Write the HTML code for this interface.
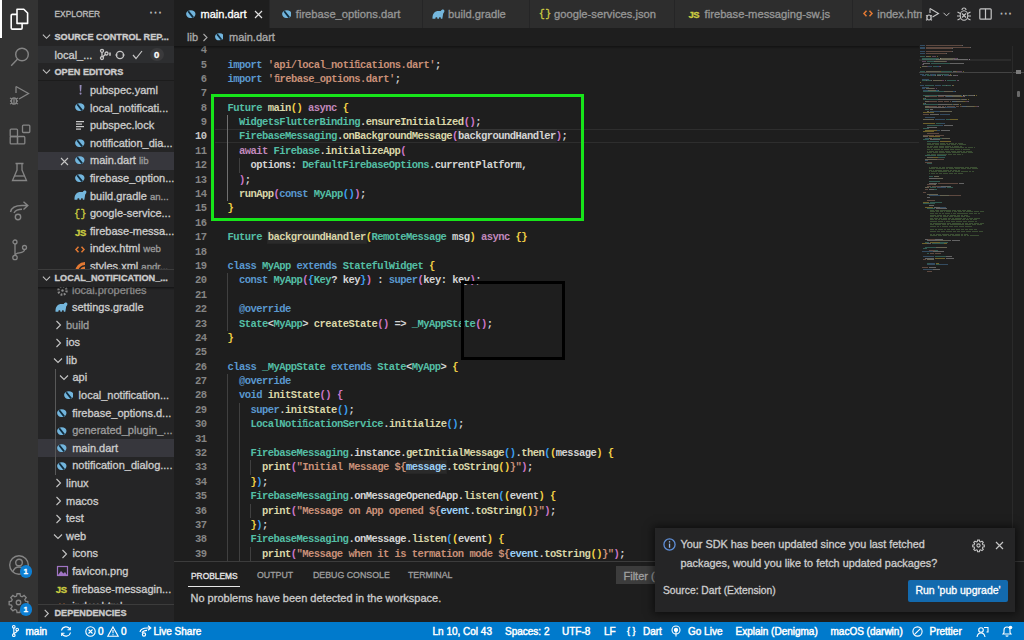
<!DOCTYPE html>
<html><head><meta charset="utf-8">
<style>
*{box-sizing:border-box;margin:0;padding:0}
html,body{width:1024px;height:640px;overflow:hidden;background:#1e1e1e}
body{position:relative;font-family:"Liberation Sans",sans-serif;color:#cccccc}
.t{-webkit-text-stroke:0.32px currentColor}
.a{position:absolute}
.t{position:absolute;white-space:nowrap;line-height:1}
.ln{position:absolute;left:170px;width:36.5px;text-align:right;font:bold 10.5px/14.4px "Liberation Mono",monospace;letter-spacing:-0.54px;height:14.4px}
.cl{position:absolute;left:227.4px;font:bold 10.5px/14.4px "Liberation Mono",monospace;letter-spacing:-0.54px;white-space:pre;height:14.4px}
.hl{background:rgba(255,255,255,.055);outline:1px solid rgba(255,255,255,.04)}
.sb{font-size:11px;color:#cccccc}
.hdr{font-size:9.15px;font-weight:bold;color:#cccccc}
.ic{position:absolute;overflow:visible}
.fi{display:inline-block;width:5.76px;letter-spacing:-3.3px;transform:scaleX(.72);transform-origin:0 50%;margin-left:.2px}
</style></head><body>

<!-- ACTIVITY BAR -->
<div class="a" style="left:0;top:0;width:38.4px;height:622px;background:#333333"></div>
<div class="a" style="left:0;top:0;width:2px;height:38px;background:#ffffff"></div>
<!-- explorer icon -->
<svg class="ic" style="left:9px;top:8px" width="20" height="22" viewBox="0 0 20 22" fill="none" stroke="#ffffff" stroke-width="1.6" stroke-linejoin="round">
 <path d="M8 1.2 H14.8 L18.6 5 V15.4 H8 Z"/>
 <path d="M8 6.4 H3.3 Q2.2 6.4 2.2 7.5 V20 Q2.2 21.1 3.3 21.1 H12 Q13.1 21.1 13.1 20 V15.4"/>
</svg>
<!-- search -->
<svg class="ic" style="left:9px;top:45px" width="22" height="24" viewBox="0 0 22 24" fill="none" stroke="#858585" stroke-width="1.4">
 <circle cx="13" cy="9.5" r="6.3"/><path d="M8.6 14 L2.2 20.8"/>
</svg>
<!-- run debug -->
<svg class="ic" style="left:8px;top:84px" width="24" height="24" viewBox="0 0 24 24" fill="none" stroke="#858585" stroke-width="1.3">
 <path d="M8 2.5 L20.5 9.5 L11 15"/><path d="M8 2.5 V9"/>
 <ellipse cx="6" cy="17" rx="2.6" ry="3.2"/><path d="M2 14 L4 15 M2 17 H3.4 M2 20 L4 19 M10 14 L8 15 M10 17 H8.6 M10 20 L8 19 M6 14 V20"/>
</svg>
<!-- extensions -->
<svg class="ic" style="left:8.5px;top:123.5px" width="22" height="22" viewBox="0 0 22 22" fill="none" stroke="#858585" stroke-width="1.3">
 <rect x="1.2" y="5.2" width="7.3" height="7.3" rx=".9"/><rect x="1.2" y="12.5" width="7.3" height="7.3" rx=".9"/><rect x="8.5" y="12.5" width="7.3" height="7.3" rx=".9"/><rect x="13.5" y="1.2" width="7.3" height="7.3" rx=".9"/>
</svg>
<!-- testing flask -->
<svg class="ic" style="left:11px;top:162px" width="18" height="22" viewBox="0 0 18 22" fill="none" stroke="#858585" stroke-width="1.3">
 <path d="M4.5 1.5 H12.5 M6 1.5 V8 L1.5 18.5 H15.5 L11 8 V1.5"/><path d="M3.3 14 H13.7"/>
</svg>
<!-- live share -->
<svg class="ic" style="left:9px;top:200px" width="22" height="22" viewBox="0 0 22 22" fill="none" stroke="#858585" stroke-width="1.4">
 <path d="M1.5 12 C2.5 7 7 5.5 13 5.5 H18.5 M14.5 1.8 L18.8 5.6 L14.5 9.4"/><path d="M5 13 C6.5 10.2 9 9.3 13 9.3"/><circle cx="9" cy="17" r="2.7"/>
</svg>
<!-- source control -->
<svg class="ic" style="left:11px;top:239px" width="18" height="22" viewBox="0 0 18 22" fill="none" stroke="#858585" stroke-width="1.3">
 <circle cx="4" cy="3" r="2"/><circle cx="4" cy="18.5" r="2.2"/><circle cx="13.5" cy="8.5" r="2"/><path d="M4 5 V16.3 M13.5 10.5 C13.5 13 11 13.5 8.5 13.8 C6.5 14 4.5 14.5 4.2 16"/>
</svg>
<!-- accounts -->
<svg class="ic" style="left:8px;top:554px" width="22" height="22" viewBox="0 0 22 22" fill="none" stroke="#858585" stroke-width="1.4">
 <circle cx="11" cy="11" r="9.3"/><circle cx="11" cy="8.5" r="3.3"/><path d="M4.8 17.8 C6 14.5 8.3 13 11 13 C13.7 13 16 14.5 17.2 17.8"/>
</svg>
<div class="a" style="left:19.5px;top:565px;width:12.5px;height:12.5px;border-radius:50%;background:#0e7fd3"></div>
<div class="t" style="left:19.5px;top:567.5px;width:12.5px;text-align:center;font-size:8px;font-weight:bold;color:#fff">1</div>
<!-- settings gear -->
<svg class="ic" style="left:8px;top:592px" width="21" height="21" viewBox="0 0 24 24" fill="none" stroke="#858585" stroke-width="1.5">
 <path d="M10.3 2 h3.4 l.5 2.7 1.9 .8 2.3-1.6 2.4 2.4-1.6 2.3 .8 1.9 2.7 .5 v3.4 l-2.7 .5-.8 1.9 1.6 2.3-2.4 2.4-2.3-1.6-1.9 .8-.5 2.7 h-3.4 l-.5-2.7-1.9-.8-2.3 1.6-2.4-2.4 1.6-2.3-.8-1.9-2.7-.5 v-3.4 l2.7-.5 .8-1.9-1.6-2.3 2.4-2.4 2.3 1.6 1.9-.8 z"/><circle cx="12" cy="12" r="2.6"/>
</svg>
<div class="a" style="left:19.5px;top:603px;width:12.5px;height:12.5px;border-radius:50%;background:#0e7fd3"></div>
<div class="t" style="left:19.5px;top:605.5px;width:12.5px;text-align:center;font-size:8px;font-weight:bold;color:#fff">1</div>

<!-- SIDEBAR -->
<div class="a" style="left:38.4px;top:0;width:135.6px;height:622px;background:#252526"></div>
<div class="t" style="left:54.5px;top:9.5px;font-size:8.4px;color:#bbbbbb">EXPLORER</div>
<div class="t" style="left:149px;top:6px;font-size:12px;color:#cccccc;letter-spacing:.5px">···</div>
<!-- source control repositories header -->
<svg class="ic" style="left:42px;top:32px" width="9" height="9" viewBox="0 0 10 10" fill="none" stroke="#c5c5c5" stroke-width="1.2"><path d="M1 3 L5 7 L9 3"/></svg>
<div class="t hdr" style="left:54.5px;top:32.5px">SOURCE CONTROL REP...</div>
<div class="a" style="left:38px;top:45.6px;width:136px;height:17.6px;background:#2d2e30"></div>
<div class="t sb" style="left:54.5px;top:49.5px">local_...</div>
<svg class="ic" style="left:98.5px;top:47.5px" width="13" height="13" viewBox="0 0 13 13" fill="none" stroke="#c5c5c5" stroke-width="1.3"><circle cx="3" cy="2.8" r="1.5"/><circle cx="3" cy="10" r="1.5"/><circle cx="7.5" cy="5.5" r="1.5"/><path d="M3 4.3 V8.5 M6.3 6.5 L3.8 8.8"/><path d="M11 4.5 V7.8" stroke-width="1.6"/></svg>
<svg class="ic" style="left:115px;top:49.5px" width="10" height="10" viewBox="0 0 10 10" fill="none" stroke="#c5c5c5" stroke-width="1.3"><circle cx="5" cy="5" r="3.6"/><path d="M0.6 5 H2.4 M7.6 5 H9.4" stroke-width="1.6"/></svg>
<svg class="ic" style="left:132px;top:49.5px" width="11" height="10" viewBox="0 0 11 10" fill="none" stroke="#c5c5c5" stroke-width="1.2"><path d="M1 5 L4 8.5 L10 1"/></svg>
<div class="a" style="left:150px;top:47.5px;width:13.5px;height:13.5px;border-radius:50%;background:#3a3a3c"></div>
<div class="t" style="left:150px;top:50px;width:13.5px;text-align:center;font-size:9.5px;font-weight:bold;color:#ffffff">0</div>
<!-- open editors header -->
<svg class="ic" style="left:42px;top:67px" width="9" height="9" viewBox="0 0 10 10" fill="none" stroke="#c5c5c5" stroke-width="1.2"><path d="M1 3 L5 7 L9 3"/></svg>
<div class="t hdr" style="left:54.5px;top:67.8px">OPEN EDITORS</div>
<div class="a" style="left:38px;top:80.2px;width:136px;height:1px;background:#1c1c1c"></div>

<div class="a" style="left:38px;top:152px;width:136px;height:17.6px;background:#37373d"></div>


<!-- open editors list -->
<svg class="ic" style="left:77.5px;top:85px" width="5" height="10" viewBox="0 0 5 10"><path d="M1.6 0 H3.6 L3.1 6.6 H2 Z" fill="#948ab8"/><circle cx="2.55" cy="8.6" r="1.05" fill="#948ab8"/></svg>
<div class="t sb" style="left:90px;top:85px">pubspec.yaml</div>
<svg style="position:absolute;left:75.4px;top:103.4px" width="9.6" height="8.2" viewBox="0 0 10 8.5" preserveAspectRatio="none"><ellipse cx="5" cy="4.25" rx="4.9" ry="4.1" fill="#72b5dd"/><path d="M2.3 1.3 L7.4 7.6" stroke="#102c3e" stroke-width="1.9"/></svg>
<div class="t sb" style="left:90px;top:102.6px">local_notificati...</div>
<svg class="ic" style="left:75.5px;top:121px" width="9" height="10" viewBox="0 0 9 10" fill="#cbcbcb"><rect x="0" y="0" width="8" height="1.2"/><rect x="0" y="2.5" width="6" height="1.2"/><rect x="0" y="5" width="8" height="1.2"/><rect x="0" y="7.5" width="5" height="1.2"/></svg>
<div class="t sb" style="left:90px;top:120.2px">pubspec.lock</div>
<svg style="position:absolute;left:75.4px;top:138.6px" width="9.6" height="8.2" viewBox="0 0 10 8.5" preserveAspectRatio="none"><ellipse cx="5" cy="4.25" rx="4.9" ry="4.1" fill="#72b5dd"/><path d="M2.3 1.3 L7.4 7.6" stroke="#102c3e" stroke-width="1.9"/></svg>
<div class="t sb" style="left:90px;top:137.8px">notification_dia...</div>
<svg class="ic" style="left:60px;top:156.5px" width="9" height="9" viewBox="0 0 9 9" fill="none" stroke="#c5c5c5" stroke-width="1.1"><path d="M1 1 L8 8 M8 1 L1 8"/></svg>
<svg style="position:absolute;left:75.4px;top:156.2px" width="9.6" height="8.2" viewBox="0 0 10 8.5" preserveAspectRatio="none"><ellipse cx="5" cy="4.25" rx="4.9" ry="4.1" fill="#72b5dd"/><path d="M2.3 1.3 L7.4 7.6" stroke="#102c3e" stroke-width="1.9"/></svg>
<div class="t sb" style="left:90px;top:155.4px">main.dart <span style="font-size:9.6px;color:#9a9a9a">lib</span></div>
<svg style="position:absolute;left:75.4px;top:173.8px" width="9.6" height="8.2" viewBox="0 0 10 8.5" preserveAspectRatio="none"><ellipse cx="5" cy="4.25" rx="4.9" ry="4.1" fill="#72b5dd"/><path d="M2.3 1.3 L7.4 7.6" stroke="#102c3e" stroke-width="1.9"/></svg>
<div class="t sb" style="left:90px;top:173px">firebase_option...</div>
<svg class="ic" style="left:74px;top:190px" width="13" height="11" viewBox="0 0 13 11"><path d="M0.5 9.8 C0.3 4.5 2.8 2 6.5 2 L8.8 2 C9.3 0.8 10.3 0.3 11.3 0.5 C12.4 0.8 12.7 2 12.2 3 L11.2 4.4 C10.9 6.2 10.6 8 10.3 9.8 H8.9 L8.6 8.2 H7.2 L6.9 9.8 H5.4 L5.1 8.2 H3.7 L3.3 9.8 Z" fill="#74b6dc"/></svg>
<div class="t sb" style="left:90px;top:190.6px">build.gradle <span style="font-size:9.6px;color:#9a9a9a">an...</span></div>
<div class="t" style="left:74px;top:208.8px;font:10px 'Liberation Mono',monospace;color:#cbcb41;letter-spacing:.5px">{}</div>
<div class="t sb" style="left:90px;top:208.2px">google-service...</div>
<div class="t" style="left:75px;top:226.5px;font:bold 9.5px 'Liberation Sans',sans-serif;color:#cbcb41;letter-spacing:-.3px">JS</div>
<div class="t sb" style="left:90px;top:225.8px">firebase-messa...</div>
<svg class="ic" style="left:75px;top:245.5px" width="10" height="7" viewBox="0 0 10 7" fill="none" stroke="#e37933" stroke-width="1.5"><path d="M3.5 .8 L1 3.5 L3.5 6.2 M6.5 .8 L9 3.5 L6.5 6.2"/></svg>
<div class="t sb" style="left:90px;top:243.4px">index.html <span style="font-size:9.6px;color:#9a9a9a">web</span></div>
<svg class="ic" style="left:75px;top:262px" width="11" height="10" viewBox="0 0 11 10"><path d="M0 10 A10 10 0 0 1 10 0 V3 A7 7 0 0 0 3 10 Z M4.5 10 A5.5 5.5 0 0 1 10 4.5 V10 Z" fill="#e37933"/></svg>
<div class="t sb" style="left:90px;top:261px">styles.xml <span style="font-size:9.6px;color:#9a9a9a">andr...</span></div>

<!-- LOCAL_NOTIFICATION tree -->
<div class="a" style="left:38px;top:280px;width:136px;height:342px;background:#252526"></div>
<div class="t sb" style="left:72px;top:284.5px;color:#8c8c8c">local.properties</div>
<svg class="ic" style="left:56.5px;top:285px" width="11" height="11" viewBox="0 0 12 12"><circle cx="6" cy="6" r="4.5" fill="none" stroke="#8a8a8a" stroke-width="2.4" stroke-dasharray="2 1.5"/><circle cx="6" cy="6" r="1.3" fill="#8a8a8a"/></svg>
<div class="a" style="left:38px;top:269.4px;width:136px;height:17.6px;background:#252526"></div>
<div class="a" style="left:38px;top:287px;width:136px;height:3px;background:linear-gradient(rgba(0,0,0,.45),rgba(0,0,0,0))"></div>
<div class="a" style="left:38px;top:269px;width:136px;height:1px;background:#3c3c3c"></div>
<svg class="ic" style="left:42px;top:274px" width="9" height="9" viewBox="0 0 10 10" fill="none" stroke="#c5c5c5" stroke-width="1.2"><path d="M1 3 L5 7 L9 3"/></svg>
<div class="t hdr" style="left:54.5px;top:274px">LOCAL_NOTIFICATION_...</div>

<svg class="ic" style="left:55.3px;top:302px" width="13" height="11" viewBox="0 0 13 11"><path d="M0.5 9.8 C0.3 4.5 2.8 2 6.5 2 L8.8 2 C9.3 0.8 10.3 0.3 11.3 0.5 C12.4 0.8 12.7 2 12.2 3 L11.2 4.4 C10.9 6.2 10.6 8 10.3 9.8 H8.9 L8.6 8.2 H7.2 L6.9 9.8 H5.4 L5.1 8.2 H3.7 L3.3 9.8 Z" fill="#74b6dc"/></svg>
<div class="t sb" style="left:72px;top:302px">settings.gradle</div>
<div class="a" style="left:38px;top:439.4px;width:136px;height:17.6px;background:#37373d"></div>
<div class="a" style="left:54.5px;top:369.0px;width:1px;height:105.6px;background:#585858"></div>
<svg class="ic" style="left:54.5px;top:320.0px" width="7" height="10" viewBox="0 0 7 10" fill="none" stroke="#c5c5c5" stroke-width="1.1"><path d="M1.5 1 L5.5 5 L1.5 9"/></svg>
<div class="t sb" style="left:66.0px;top:319.6px;color:#9c9c9c">build</div>
<svg class="ic" style="left:54.5px;top:337.6px" width="7" height="10" viewBox="0 0 7 10" fill="none" stroke="#c5c5c5" stroke-width="1.1"><path d="M1.5 1 L5.5 5 L1.5 9"/></svg>
<div class="t sb" style="left:66.0px;top:337.2px;color:#cccccc">ios</div>
<svg class="ic" style="left:53.0px;top:356.7px" width="10" height="7" viewBox="0 0 10 7" fill="none" stroke="#c5c5c5" stroke-width="1.1"><path d="M1 1.5 L5 5.5 L9 1.5"/></svg>
<div class="t sb" style="left:66.0px;top:354.8px;color:#cccccc">lib</div>
<svg class="ic" style="left:59.4px;top:374.3px" width="10" height="7" viewBox="0 0 10 7" fill="none" stroke="#c5c5c5" stroke-width="1.1"><path d="M1 1.5 L5 5.5 L9 1.5"/></svg>
<div class="t sb" style="left:72.4px;top:372.4px;color:#cccccc">api</div>
<svg style="position:absolute;left:63.8px;top:391.3px" width="9.6" height="8.2" viewBox="0 0 10 8.5" preserveAspectRatio="none"><ellipse cx="5" cy="4.25" rx="4.9" ry="4.1" fill="#72b5dd"/><path d="M2.3 1.3 L7.4 7.6" stroke="#102c3e" stroke-width="1.9"/></svg>
<div class="t sb" style="left:78.6px;top:390.0px;color:#cccccc">local_notification...</div>
<svg style="position:absolute;left:57.4px;top:408.9px" width="9.6" height="8.2" viewBox="0 0 10 8.5" preserveAspectRatio="none"><ellipse cx="5" cy="4.25" rx="4.9" ry="4.1" fill="#72b5dd"/><path d="M2.3 1.3 L7.4 7.6" stroke="#102c3e" stroke-width="1.9"/></svg>
<div class="t sb" style="left:72.2px;top:407.6px;color:#cccccc">firebase_options.d...</div>
<svg style="position:absolute;left:57.4px;top:426.5px" width="9.6" height="8.2" viewBox="0 0 10 8.5" preserveAspectRatio="none"><ellipse cx="5" cy="4.25" rx="4.9" ry="4.1" fill="#72b5dd"/><path d="M2.3 1.3 L7.4 7.6" stroke="#102c3e" stroke-width="1.9"/></svg>
<div class="t sb" style="left:72.2px;top:425.2px;color:#9c9c9c">generated_plugin_...</div>
<svg style="position:absolute;left:57.4px;top:444.1px" width="9.6" height="8.2" viewBox="0 0 10 8.5" preserveAspectRatio="none"><ellipse cx="5" cy="4.25" rx="4.9" ry="4.1" fill="#72b5dd"/><path d="M2.3 1.3 L7.4 7.6" stroke="#102c3e" stroke-width="1.9"/></svg>
<div class="t sb" style="left:72.2px;top:442.8px;color:#cccccc">main.dart</div>
<svg style="position:absolute;left:57.4px;top:461.7px" width="9.6" height="8.2" viewBox="0 0 10 8.5" preserveAspectRatio="none"><ellipse cx="5" cy="4.25" rx="4.9" ry="4.1" fill="#72b5dd"/><path d="M2.3 1.3 L7.4 7.6" stroke="#102c3e" stroke-width="1.9"/></svg>
<div class="t sb" style="left:72.2px;top:460.4px;color:#cccccc">notification_dialog....</div>
<svg class="ic" style="left:54.5px;top:478.4px" width="7" height="10" viewBox="0 0 7 10" fill="none" stroke="#c5c5c5" stroke-width="1.1"><path d="M1.5 1 L5.5 5 L1.5 9"/></svg>
<div class="t sb" style="left:66.0px;top:478.0px;color:#cccccc">linux</div>
<svg class="ic" style="left:54.5px;top:496.0px" width="7" height="10" viewBox="0 0 7 10" fill="none" stroke="#c5c5c5" stroke-width="1.1"><path d="M1.5 1 L5.5 5 L1.5 9"/></svg>
<div class="t sb" style="left:66.0px;top:495.6px;color:#cccccc">macos</div>
<svg class="ic" style="left:54.5px;top:513.6px" width="7" height="10" viewBox="0 0 7 10" fill="none" stroke="#c5c5c5" stroke-width="1.1"><path d="M1.5 1 L5.5 5 L1.5 9"/></svg>
<div class="t sb" style="left:66.0px;top:513.2px;color:#cccccc">test</div>
<svg class="ic" style="left:53.0px;top:532.7px" width="10" height="7" viewBox="0 0 10 7" fill="none" stroke="#c5c5c5" stroke-width="1.1"><path d="M1 1.5 L5 5.5 L9 1.5"/></svg>
<div class="t sb" style="left:66.0px;top:530.8px;color:#cccccc">web</div>
<svg class="ic" style="left:60.9px;top:548.8px" width="7" height="10" viewBox="0 0 7 10" fill="none" stroke="#c5c5c5" stroke-width="1.1"><path d="M1.5 1 L5.5 5 L1.5 9"/></svg>
<div class="t sb" style="left:72.4px;top:548.4px;color:#cccccc">icons</div>
<svg class="ic" style="left:56.7px;top:566.4px" width="11" height="10" viewBox="0 0 11 10"><rect x="0.5" y="0.5" width="10" height="9" fill="none" stroke="#a074c4" stroke-width="1.2"/><path d="M1 9 L4 5 L6.5 7.5 L8 6 L10 9 Z" fill="#a074c4"/></svg>
<div class="t sb" style="left:72.2px;top:566.0px;color:#cccccc">favicon.png</div>
<div class="t" style="left:55.7px;top:584.2px;font:bold 9.5px 'Liberation Sans',sans-serif;color:#cbcb41;letter-spacing:-.3px">JS</div>
<div class="t sb" style="left:72.2px;top:583.6px;color:#cccccc">firebase-messagin...</div>
<svg class="ic" style="left:56.7px;top:603.1px" width="10" height="7" viewBox="0 0 10 7" fill="none" stroke="#e37933" stroke-width="1.5"><path d="M3.5 .8 L1 3.5 L3.5 6.2 M6.5 .8 L9 3.5 L6.5 6.2"/></svg>
<div class="t sb" style="left:72.2px;top:601.2px;color:#cccccc">index.html</div>

<div class="a" style="left:38px;top:604.5px;width:136px;height:17.5px;background:#252526"></div>
<div class="a" style="left:38px;top:604px;width:136px;height:1px;background:#3c3c3c"></div>
<svg class="ic" style="left:42px;top:609px" width="9" height="9" viewBox="0 0 10 10" fill="none" stroke="#c5c5c5" stroke-width="1.2"><path d="M3 1 L7 5 L3 9"/></svg>
<div class="t hdr" style="left:54.5px;top:609px">DEPENDENCIES</div>

<!-- EDITOR TABS -->
<div class="a" style="left:174px;top:0;width:850px;height:28px;background:#252526"></div>
<div class="a" style="left:174px;top:0;width:95.5px;height:28px;background:#1e1e1e;border-right:1px solid #252526;overflow:hidden"></div>
<svg style="position:absolute;left:186.2px;top:9.7px" width="9.6" height="8.2" viewBox="0 0 10 8.5" preserveAspectRatio="none"><ellipse cx="5" cy="4.25" rx="4.9" ry="4.1" fill="#72b5dd"/><path d="M2.3 1.3 L7.4 7.6" stroke="#102c3e" stroke-width="1.9"/></svg>
<div class="t" style="left:200.6px;top:9.2px;font-size:11.0px;color:#ffffff">main.dart</div>
<svg class="ic" style="left:254px;top:9.5px" width="9" height="9" viewBox="0 0 9 9" fill="none" stroke="#e0e0e0" stroke-width="1.2"><path d="M1 1 L8 8 M8 1 L1 8"/></svg>
<div class="a" style="left:269.5px;top:0;width:153.5px;height:28px;background:#2d2d2d;border-right:1px solid #252526;overflow:hidden"></div>
<svg style="position:absolute;left:281.7px;top:9.7px" width="9.6" height="8.2" viewBox="0 0 10 8.5" preserveAspectRatio="none"><ellipse cx="5" cy="4.25" rx="4.9" ry="4.1" fill="#72b5dd"/><path d="M2.3 1.3 L7.4 7.6" stroke="#102c3e" stroke-width="1.9"/></svg>
<div class="t" style="left:295.8px;top:9.2px;font-size:11.2px;color:#969696">firebase_options.dart</div>
<div class="a" style="left:423px;top:0;width:106.5px;height:28px;background:#2d2d2d;border-right:1px solid #252526;overflow:hidden"></div>
<svg class="ic" style="left:431.7px;top:8.5px" width="13" height="11" viewBox="0 0 13 11"><path d="M0.5 9.8 C0.3 4.5 2.8 2 6.5 2 L8.8 2 C9.3 0.8 10.3 0.3 11.3 0.5 C12.4 0.8 12.7 2 12.2 3 L11.2 4.4 C10.9 6.2 10.6 8 10.3 9.8 H8.9 L8.6 8.2 H7.2 L6.9 9.8 H5.4 L5.1 8.2 H3.7 L3.3 9.8 Z" fill="#74b6dc"/></svg>
<div class="t" style="left:448.0px;top:9.2px;font-size:11.2px;color:#969696">build.gradle</div>
<div class="a" style="left:529.5px;top:0;width:145.5px;height:28px;background:#2d2d2d;border-right:1px solid #252526;overflow:hidden"></div>
<div class="t" style="left:538.7px;top:8.8px;font:10px 'Liberation Mono',monospace;color:#cbcb41;letter-spacing:.5px">{}</div>
<div class="t" style="left:554.0px;top:9.2px;font-size:11.2px;color:#969696">google-services.json</div>
<div class="a" style="left:675px;top:0;width:178px;height:28px;background:#2d2d2d;border-right:1px solid #252526;overflow:hidden"></div>
<div class="t" style="left:688.4px;top:9px;font:bold 9.5px 'Liberation Sans',sans-serif;color:#cbcb41;letter-spacing:-.3px">JS</div>
<div class="t" style="left:704.6px;top:9.2px;font-size:11.2px;color:#969696">firebase-messaging-sw.js</div>
<div class="a" style="left:853px;top:0;width:171px;height:28px;background:#2d2d2d;border-right:1px solid #252526;overflow:hidden"></div>
<svg class="ic" style="left:862.5px;top:10.3px" width="10" height="7" viewBox="0 0 10 7" fill="none" stroke="#e37933" stroke-width="1.5"><path d="M3.5 .8 L1 3.5 L3.5 6.2 M6.5 .8 L9 3.5 L6.5 6.2"/></svg>
<div class="t" style="left:877.2px;top:9.2px;font-size:11.2px;color:#969696">index.html</div>
<div class="a" style="left:921.5px;top:0;width:102.5px;height:28px;background:#252526"></div>
<svg class="ic" style="left:925px;top:7px" width="15" height="15" viewBox="0 0 15 15" fill="none" stroke="#c5c5c5" stroke-width="1.1"><path d="M5 1.5 L13.5 6.5 L7.5 10"/><path d="M5 1.5 V6"/><ellipse cx="4" cy="10.5" rx="2" ry="2.5"/><path d="M1 8.5 L2.3 9.3 M1 11 H2 M1 13.3 L2.3 12.5 M7 8.5 L5.7 9.3 M7 11 H6 M7 13.3 L5.7 12.5"/></svg>
<svg class="ic" style="left:942.5px;top:12px" width="7" height="5" viewBox="0 0 7 5" fill="none" stroke="#c5c5c5" stroke-width="1"><path d="M.5 .8 L3.5 3.8 L6.5 .8"/></svg>
<svg class="ic" style="left:956px;top:6.5px" width="16" height="15" viewBox="0 0 16 15" fill="none" stroke="#c5c5c5" stroke-width="1.1"><path d="M6 3 A2 2 0 0 1 10 3"/><ellipse cx="8" cy="8.5" rx="3.8" ry="4.8"/><path d="M6 6.5 L10 10.5 M10 6.5 L6 10.5 M1.5 5 L4.3 6.5 M1 9 H4.2 M1.5 13 L4.5 11.5 M14.5 5 L11.7 6.5 M15 9 H11.8 M14.5 13 L11.5 11.5"/></svg>
<svg class="ic" style="left:979px;top:7.5px" width="13" height="12" viewBox="0 0 13 12" fill="none" stroke="#c5c5c5" stroke-width="1.2"><rect x=".8" y=".8" width="11.4" height="10.4" rx="1"/><path d="M6.5 .8 V11.2"/></svg>
<div class="t" style="left:999.5px;top:7.3px;font-size:12px;color:#c5c5c5;letter-spacing:.3px">···</div>

<!-- BREADCRUMBS -->
<div class="a" style="left:174px;top:28px;width:850px;height:18px;background:#1e1e1e"></div>
<div class="t sb" style="left:187px;top:32px;color:#a9a9a9">lib</div>
<svg class="ic" style="left:202px;top:33px" width="7" height="9" viewBox="0 0 7 9" fill="none" stroke="#a9a9a9" stroke-width="1.1"><path d="M1.5 1 L5 4.5 L1.5 8"/></svg>
<svg style="position:absolute;left:214.6px;top:33.3px" width="8.8" height="7.5" viewBox="0 0 10 8.5" preserveAspectRatio="none"><ellipse cx="5" cy="4.25" rx="4.9" ry="4.1" fill="#72b5dd"/><path d="M2.3 1.3 L7.4 7.6" stroke="#102c3e" stroke-width="1.9"/></svg>
<div class="t sb" style="left:229px;top:32px;color:#a9a9a9">main.dart</div>

<!-- CODE -->
<div class="a" style="left:174px;top:46px;width:850px;height:515px;overflow:hidden">
 <div class="a" style="left:-174px;top:-46px;width:1024px;height:640px">
<div class="a" style="left:215px;top:128.6px;width:704px;height:14px;border-top:1px solid #2e2e2e;border-bottom:1px solid #2e2e2e"></div>
<div style="position:absolute;left:227.40px;top:115.06px;width:1px;height:14.4px;background:#707070"></div>
<div style="position:absolute;left:227.40px;top:129.45px;width:1px;height:14.4px;background:#707070"></div>
<div style="position:absolute;left:227.40px;top:143.84px;width:1px;height:14.4px;background:#707070"></div>
<div style="position:absolute;left:227.40px;top:158.23px;width:1px;height:14.4px;background:#707070"></div>
<div style="position:absolute;left:238.92px;top:158.23px;width:1px;height:14.4px;background:#404040"></div>
<div style="position:absolute;left:227.40px;top:172.62px;width:1px;height:14.4px;background:#707070"></div>
<div style="position:absolute;left:227.40px;top:187.01px;width:1px;height:14.4px;background:#707070"></div>
<div style="position:absolute;left:227.40px;top:273.35px;width:1px;height:14.4px;background:#404040"></div>
<div style="position:absolute;left:227.40px;top:287.74px;width:1px;height:14.4px;background:#404040"></div>
<div style="position:absolute;left:227.40px;top:302.13px;width:1px;height:14.4px;background:#404040"></div>
<div style="position:absolute;left:227.40px;top:316.52px;width:1px;height:14.4px;background:#404040"></div>
<div style="position:absolute;left:227.40px;top:374.08px;width:1px;height:14.4px;background:#404040"></div>
<div style="position:absolute;left:227.40px;top:388.47px;width:1px;height:14.4px;background:#404040"></div>
<div style="position:absolute;left:227.40px;top:402.86px;width:1px;height:14.4px;background:#404040"></div>
<div style="position:absolute;left:238.92px;top:402.86px;width:1px;height:14.4px;background:#404040"></div>
<div style="position:absolute;left:227.40px;top:417.25px;width:1px;height:14.4px;background:#404040"></div>
<div style="position:absolute;left:238.92px;top:417.25px;width:1px;height:14.4px;background:#404040"></div>
<div style="position:absolute;left:227.40px;top:431.64px;width:1px;height:14.4px;background:#404040"></div>
<div style="position:absolute;left:238.92px;top:431.64px;width:1px;height:14.4px;background:#404040"></div>
<div style="position:absolute;left:227.40px;top:446.03px;width:1px;height:14.4px;background:#404040"></div>
<div style="position:absolute;left:238.92px;top:446.03px;width:1px;height:14.4px;background:#404040"></div>
<div style="position:absolute;left:227.40px;top:460.42px;width:1px;height:14.4px;background:#404040"></div>
<div style="position:absolute;left:238.92px;top:460.42px;width:1px;height:14.4px;background:#404040"></div>
<div style="position:absolute;left:250.44px;top:460.42px;width:1px;height:14.4px;background:#404040"></div>
<div style="position:absolute;left:227.40px;top:474.81px;width:1px;height:14.4px;background:#404040"></div>
<div style="position:absolute;left:238.92px;top:474.81px;width:1px;height:14.4px;background:#404040"></div>
<div style="position:absolute;left:227.40px;top:489.20px;width:1px;height:14.4px;background:#404040"></div>
<div style="position:absolute;left:238.92px;top:489.20px;width:1px;height:14.4px;background:#404040"></div>
<div style="position:absolute;left:227.40px;top:503.59px;width:1px;height:14.4px;background:#404040"></div>
<div style="position:absolute;left:238.92px;top:503.59px;width:1px;height:14.4px;background:#404040"></div>
<div style="position:absolute;left:250.44px;top:503.59px;width:1px;height:14.4px;background:#404040"></div>
<div style="position:absolute;left:227.40px;top:517.98px;width:1px;height:14.4px;background:#404040"></div>
<div style="position:absolute;left:238.92px;top:517.98px;width:1px;height:14.4px;background:#404040"></div>
<div style="position:absolute;left:227.40px;top:532.37px;width:1px;height:14.4px;background:#404040"></div>
<div style="position:absolute;left:238.92px;top:532.37px;width:1px;height:14.4px;background:#404040"></div>
<div style="position:absolute;left:227.40px;top:546.76px;width:1px;height:14.4px;background:#404040"></div>
<div style="position:absolute;left:238.92px;top:546.76px;width:1px;height:14.4px;background:#404040"></div>
<div style="position:absolute;left:250.44px;top:546.76px;width:1px;height:14.4px;background:#404040"></div>
<div style="position:absolute;left:227.40px;top:561.15px;width:1px;height:14.4px;background:#404040"></div>
<div style="position:absolute;left:238.92px;top:561.15px;width:1px;height:14.4px;background:#404040"></div>
<div style="position:absolute;left:250.44px;top:561.15px;width:1px;height:14.4px;background:#404040"></div>
<div style="position:absolute;left:261.96px;top:561.15px;width:1px;height:14.4px;background:#404040"></div>
<div class="ln" style="top:43.11px;color:#858585">4</div>
<div class="ln" style="top:57.50px;color:#858585">5</div>
<div class="cl" style="top:57.50px"><span style="color:#5a98cf">import</span><span style="color:#d4d4d4"> </span><span style="color:#c99078">&#x27;api/local_noti<span class="fi">fi</span>cations.dart&#x27;</span><span style="color:#d4d4d4">;</span></div>
<div class="ln" style="top:71.89px;color:#858585">6</div>
<div class="cl" style="top:71.89px"><span style="color:#5a98cf">import</span><span style="color:#d4d4d4"> </span><span style="color:#c99078">&#x27;<span class="fi">fi</span>rebase_options.dart&#x27;</span><span style="color:#d4d4d4">;</span></div>
<div class="ln" style="top:86.28px;color:#858585">7</div>
<div class="ln" style="top:100.67px;color:#858585">8</div>
<div class="cl" style="top:100.67px"><span style="color:#54bea5">Future</span><span style="color:#d4d4d4"> </span><span style="color:#d9d6a8">main</span><span style="color:#f0cf45">()</span><span style="color:#d4d4d4"> </span><span style="color:#c088bb">async</span><span style="color:#d4d4d4"> </span><span style="color:#f0cf45">{</span></div>
<div class="ln" style="top:115.06px;color:#858585">9</div>
<div class="cl" style="top:115.06px"><span style="color:#d4d4d4">  </span><span style="color:#54bea5">WidgetsFlutterBinding</span><span style="color:#d4d4d4">.</span><span style="color:#d9d6a8">ensureInitialized</span><span style="color:#cc76c8">()</span><span style="color:#d4d4d4">;</span></div>
<div class="ln" style="top:129.45px;color:#c6c6c6">10</div>
<div class="cl" style="top:129.45px"><span style="color:#d4d4d4">  </span><span style="color:#54bea5">FirebaseMessaging</span><span style="color:#d4d4d4">.</span><span style="color:#d9d6a8">onBackgroundMessage</span><span style="color:#cc76c8">(</span><span class="hl" style="color:#d4d4d4">backgroundHandler</span><span style="color:#cc76c8">)</span><span style="color:#d4d4d4">;</span></div>
<div class="ln" style="top:143.84px;color:#858585">11</div>
<div class="cl" style="top:143.84px"><span style="color:#d4d4d4">  </span><span style="color:#c088bb">await</span><span style="color:#d4d4d4"> </span><span style="color:#54bea5">Firebase</span><span style="color:#d4d4d4">.</span><span style="color:#d9d6a8">initializeApp</span><span style="color:#cc76c8">(</span></div>
<div class="ln" style="top:158.23px;color:#858585">12</div>
<div class="cl" style="top:158.23px"><span style="color:#d4d4d4">    options: </span><span style="color:#54bea5">DefaultFirebaseOptions</span><span style="color:#d4d4d4">.currentPlatform,</span></div>
<div class="ln" style="top:172.62px;color:#858585">13</div>
<div class="cl" style="top:172.62px"><span style="color:#d4d4d4">  </span><span style="color:#cc76c8">)</span><span style="color:#d4d4d4">;</span></div>
<div class="ln" style="top:187.01px;color:#858585">14</div>
<div class="cl" style="top:187.01px"><span style="color:#d4d4d4">  </span><span style="color:#d9d6a8">runApp</span><span style="color:#cc76c8">(</span><span style="color:#5a98cf">const</span><span style="color:#d4d4d4"> </span><span style="color:#54bea5">MyApp</span><span style="color:#3a9ff0">()</span><span style="color:#cc76c8">)</span><span style="color:#d4d4d4">;</span></div>
<div class="ln" style="top:201.40px;color:#858585">15</div>
<div class="cl" style="top:201.40px"><span style="color:#f0cf45">}</span></div>
<div class="ln" style="top:215.79px;color:#858585">16</div>
<div class="ln" style="top:230.18px;color:#858585">17</div>
<div class="cl" style="top:230.18px"><span style="color:#54bea5">Future</span><span style="color:#d4d4d4"> </span><span class="hl" style="color:#d9d6a8">backgroundHandler</span><span style="color:#f0cf45">(</span><span style="color:#54bea5">RemoteMessage</span><span style="color:#d4d4d4"> msg</span><span style="color:#f0cf45">)</span><span style="color:#d4d4d4"> </span><span style="color:#c088bb">async</span><span style="color:#d4d4d4"> </span><span style="color:#f0cf45">{}</span></div>
<div class="ln" style="top:244.57px;color:#858585">18</div>
<div class="ln" style="top:258.96px;color:#858585">19</div>
<div class="cl" style="top:258.96px"><span style="color:#5a98cf">class</span><span style="color:#d4d4d4"> </span><span style="color:#54bea5">MyApp</span><span style="color:#d4d4d4"> </span><span style="color:#5a98cf">extends</span><span style="color:#d4d4d4"> </span><span style="color:#54bea5">StatefulWidget</span><span style="color:#d4d4d4"> </span><span style="color:#f0cf45">{</span></div>
<div class="ln" style="top:273.35px;color:#858585">20</div>
<div class="cl" style="top:273.35px"><span style="color:#d4d4d4">  </span><span style="color:#5a98cf">const</span><span style="color:#d4d4d4"> </span><span style="color:#54bea5">MyApp</span><span style="color:#cc76c8">(</span><span style="color:#3a9ff0">{</span><span style="color:#54bea5">Key</span><span style="color:#d4d4d4">? key</span><span style="color:#3a9ff0">}</span><span style="color:#cc76c8">)</span><span style="color:#d4d4d4"> : </span><span style="color:#5a98cf">super</span><span style="color:#cc76c8">(</span><span style="color:#d4d4d4">key: key</span><span style="color:#cc76c8">)</span><span style="color:#d4d4d4">;</span></div>
<div class="ln" style="top:287.74px;color:#858585">21</div>
<div class="ln" style="top:302.13px;color:#858585">22</div>
<div class="cl" style="top:302.13px"><span style="color:#d4d4d4">  </span><span style="color:#5a98cf">@override</span></div>
<div class="ln" style="top:316.52px;color:#858585">23</div>
<div class="cl" style="top:316.52px"><span style="color:#d4d4d4">  </span><span style="color:#54bea5">State</span><span style="color:#d4d4d4">&lt;</span><span style="color:#54bea5">MyApp</span><span style="color:#d4d4d4">&gt; </span><span style="color:#d9d6a8">createState</span><span style="color:#cc76c8">()</span><span style="color:#d4d4d4"> =&gt; </span><span style="color:#54bea5">_MyAppState</span><span style="color:#cc76c8">()</span><span style="color:#d4d4d4">;</span></div>
<div class="ln" style="top:330.91px;color:#858585">24</div>
<div class="cl" style="top:330.91px"><span style="color:#f0cf45">}</span></div>
<div class="ln" style="top:345.30px;color:#858585">25</div>
<div class="ln" style="top:359.69px;color:#858585">26</div>
<div class="cl" style="top:359.69px"><span style="color:#5a98cf">class</span><span style="color:#d4d4d4"> </span><span style="color:#54bea5">_MyAppState</span><span style="color:#d4d4d4"> </span><span style="color:#5a98cf">extends</span><span style="color:#d4d4d4"> </span><span style="color:#54bea5">State</span><span style="color:#d4d4d4">&lt;</span><span style="color:#54bea5">MyApp</span><span style="color:#d4d4d4">&gt; </span><span style="color:#f0cf45">{</span></div>
<div class="ln" style="top:374.08px;color:#858585">27</div>
<div class="cl" style="top:374.08px"><span style="color:#d4d4d4">  </span><span style="color:#5a98cf">@override</span></div>
<div class="ln" style="top:388.47px;color:#858585">28</div>
<div class="cl" style="top:388.47px"><span style="color:#d4d4d4">  </span><span style="color:#5a98cf">void</span><span style="color:#d4d4d4"> </span><span style="color:#d9d6a8">initState</span><span style="color:#cc76c8">()</span><span style="color:#d4d4d4"> </span><span style="color:#cc76c8">{</span></div>
<div class="ln" style="top:402.86px;color:#858585">29</div>
<div class="cl" style="top:402.86px"><span style="color:#d4d4d4">    </span><span style="color:#5a98cf">super</span><span style="color:#d4d4d4">.</span><span style="color:#d9d6a8">initState</span><span style="color:#3a9ff0">()</span><span style="color:#d4d4d4">;</span></div>
<div class="ln" style="top:417.25px;color:#858585">30</div>
<div class="cl" style="top:417.25px"><span style="color:#d4d4d4">    </span><span style="color:#54bea5">LocalNoti<span class="fi">fi</span>cationService</span><span style="color:#d4d4d4">.</span><span style="color:#d9d6a8">initialize</span><span style="color:#3a9ff0">()</span><span style="color:#d4d4d4">;</span></div>
<div class="ln" style="top:431.64px;color:#858585">31</div>
<div class="ln" style="top:446.03px;color:#858585">32</div>
<div class="cl" style="top:446.03px"><span style="color:#d4d4d4">    </span><span style="color:#54bea5">FirebaseMessaging</span><span style="color:#d4d4d4">.instance.</span><span style="color:#d9d6a8">getInitialMessage</span><span style="color:#3a9ff0">()</span><span style="color:#d4d4d4">.</span><span style="color:#d9d6a8">then</span><span style="color:#3a9ff0">(</span><span style="color:#f0cf45">(</span><span style="color:#d4d4d4">message</span><span style="color:#f0cf45">)</span><span style="color:#d4d4d4"> </span><span style="color:#f0cf45">{</span></div>
<div class="ln" style="top:460.42px;color:#858585">33</div>
<div class="cl" style="top:460.42px"><span style="color:#d4d4d4">      </span><span style="color:#d9d6a8">print</span><span style="color:#cc76c8">(</span><span style="color:#c99078">&quot;Initial Message </span><span style="color:#c99078">${</span><span class="hl" style="color:#9acff5">message</span><span style="color:#d4d4d4">.</span><span style="color:#d9d6a8">toString</span><span style="color:#f0cf45">()</span><span style="color:#c99078">}&quot;</span><span style="color:#cc76c8">)</span><span style="color:#d4d4d4">;</span></div>
<div class="ln" style="top:474.81px;color:#858585">34</div>
<div class="cl" style="top:474.81px"><span style="color:#d4d4d4">    </span><span style="color:#f0cf45">}</span><span style="color:#3a9ff0">)</span><span style="color:#d4d4d4">;</span></div>
<div class="ln" style="top:489.20px;color:#858585">35</div>
<div class="cl" style="top:489.20px"><span style="color:#d4d4d4">    </span><span style="color:#54bea5">FirebaseMessaging</span><span style="color:#d4d4d4">.onMessageOpenedApp.</span><span style="color:#d9d6a8">listen</span><span style="color:#3a9ff0">(</span><span style="color:#f0cf45">(</span><span style="color:#d4d4d4">event</span><span style="color:#f0cf45">)</span><span style="color:#d4d4d4"> </span><span style="color:#f0cf45">{</span></div>
<div class="ln" style="top:503.59px;color:#858585">36</div>
<div class="cl" style="top:503.59px"><span style="color:#d4d4d4">      </span><span style="color:#d9d6a8">print</span><span style="color:#cc76c8">(</span><span style="color:#c99078">&quot;Message on App opened </span><span style="color:#c99078">${</span><span style="color:#9acff5">event</span><span style="color:#d4d4d4">.</span><span style="color:#d9d6a8">toString</span><span style="color:#f0cf45">()</span><span style="color:#c99078">}&quot;</span><span style="color:#cc76c8">)</span><span style="color:#d4d4d4">;</span></div>
<div class="ln" style="top:517.98px;color:#858585">37</div>
<div class="cl" style="top:517.98px"><span style="color:#d4d4d4">    </span><span style="color:#f0cf45">}</span><span style="color:#3a9ff0">)</span><span style="color:#d4d4d4">;</span></div>
<div class="ln" style="top:532.37px;color:#858585">38</div>
<div class="cl" style="top:532.37px"><span style="color:#d4d4d4">    </span><span style="color:#54bea5">FirebaseMessaging</span><span style="color:#d4d4d4">.onMessage.</span><span style="color:#d9d6a8">listen</span><span style="color:#3a9ff0">(</span><span style="color:#f0cf45">(</span><span style="color:#d4d4d4">event</span><span style="color:#f0cf45">)</span><span style="color:#d4d4d4"> </span><span style="color:#f0cf45">{</span></div>
<div class="ln" style="top:546.76px;color:#858585">39</div>
<div class="cl" style="top:546.76px"><span style="color:#d4d4d4">      </span><span style="color:#d9d6a8">print</span><span style="color:#cc76c8">(</span><span style="color:#c99078">&quot;Message when it is termation mode </span><span style="color:#c99078">${</span><span style="color:#9acff5">event</span><span style="color:#d4d4d4">.</span><span style="color:#d9d6a8">toString</span><span style="color:#f0cf45">()</span><span style="color:#c99078">}&quot;</span><span style="color:#cc76c8">)</span><span style="color:#d4d4d4">;</span></div>
<div class="ln" style="top:561.15px;color:#858585">40</div>
 </div>
</div>
<div class="a" style="left:174px;top:45.6px;width:745px;height:3px;background:linear-gradient(rgba(0,0,0,.4),rgba(0,0,0,0))"></div>

<!-- MINIMAP -->
<div style="position:absolute;left:920.0px;top:51.4px;width:5.1px;height:1.1px;background:#5a98cf;opacity:.38"></div>
<div style="position:absolute;left:926.0px;top:51.4px;width:25.5px;height:1.1px;background:#c99078;opacity:.38"></div>
<div style="position:absolute;left:951.5px;top:51.4px;width:0.8px;height:1.1px;background:#d4d4d4;opacity:.38"></div>
<div style="position:absolute;left:920.0px;top:53.0px;width:5.1px;height:1.1px;background:#5a98cf;opacity:.38"></div>
<div style="position:absolute;left:926.0px;top:53.0px;width:19.6px;height:1.1px;background:#c99078;opacity:.38"></div>
<div style="position:absolute;left:945.5px;top:53.0px;width:0.8px;height:1.1px;background:#d4d4d4;opacity:.38"></div>
<div style="position:absolute;left:920.0px;top:56.2px;width:5.1px;height:1.1px;background:#54bea5;opacity:.38"></div>
<div style="position:absolute;left:926.0px;top:56.2px;width:3.4px;height:1.1px;background:#d9d6a8;opacity:.38"></div>
<div style="position:absolute;left:929.4px;top:56.2px;width:1.7px;height:1.1px;background:#f0cf45;opacity:.38"></div>
<div style="position:absolute;left:931.9px;top:56.2px;width:4.2px;height:1.1px;background:#c088bb;opacity:.38"></div>
<div style="position:absolute;left:937.0px;top:56.2px;width:0.8px;height:1.1px;background:#f0cf45;opacity:.38"></div>
<div style="position:absolute;left:921.7px;top:57.8px;width:17.8px;height:1.1px;background:#54bea5;opacity:.38"></div>
<div style="position:absolute;left:939.6px;top:57.8px;width:0.8px;height:1.1px;background:#d4d4d4;opacity:.38"></div>
<div style="position:absolute;left:940.4px;top:57.8px;width:14.4px;height:1.1px;background:#d9d6a8;opacity:.38"></div>
<div style="position:absolute;left:954.9px;top:57.8px;width:1.7px;height:1.1px;background:#cc76c8;opacity:.38"></div>
<div style="position:absolute;left:956.6px;top:57.8px;width:0.8px;height:1.1px;background:#d4d4d4;opacity:.38"></div>
<div style="position:absolute;left:921.7px;top:59.4px;width:14.4px;height:1.1px;background:#54bea5;opacity:.38"></div>
<div style="position:absolute;left:936.2px;top:59.4px;width:0.8px;height:1.1px;background:#d4d4d4;opacity:.38"></div>
<div style="position:absolute;left:937.0px;top:59.4px;width:16.1px;height:1.1px;background:#d9d6a8;opacity:.38"></div>
<div style="position:absolute;left:953.2px;top:59.4px;width:0.8px;height:1.1px;background:#cc76c8;opacity:.38"></div>
<div style="position:absolute;left:954.0px;top:59.4px;width:14.4px;height:1.1px;background:#d4d4d4;opacity:.38"></div>
<div style="position:absolute;left:968.5px;top:59.4px;width:0.8px;height:1.1px;background:#cc76c8;opacity:.38"></div>
<div style="position:absolute;left:969.3px;top:59.4px;width:0.8px;height:1.1px;background:#d4d4d4;opacity:.38"></div>
<div style="position:absolute;left:921.7px;top:61.0px;width:4.2px;height:1.1px;background:#c088bb;opacity:.38"></div>
<div style="position:absolute;left:926.8px;top:61.0px;width:6.8px;height:1.1px;background:#54bea5;opacity:.38"></div>
<div style="position:absolute;left:933.6px;top:61.0px;width:0.8px;height:1.1px;background:#d4d4d4;opacity:.38"></div>
<div style="position:absolute;left:934.5px;top:61.0px;width:11.0px;height:1.1px;background:#d9d6a8;opacity:.38"></div>
<div style="position:absolute;left:945.5px;top:61.0px;width:0.8px;height:1.1px;background:#cc76c8;opacity:.38"></div>
<div style="position:absolute;left:923.4px;top:62.6px;width:6.8px;height:1.1px;background:#d4d4d4;opacity:.38"></div>
<div style="position:absolute;left:931.1px;top:62.6px;width:18.7px;height:1.1px;background:#54bea5;opacity:.38"></div>
<div style="position:absolute;left:949.8px;top:62.6px;width:14.4px;height:1.1px;background:#d4d4d4;opacity:.38"></div>
<div style="position:absolute;left:921.7px;top:64.2px;width:0.8px;height:1.1px;background:#cc76c8;opacity:.38"></div>
<div style="position:absolute;left:922.6px;top:64.2px;width:0.8px;height:1.1px;background:#d4d4d4;opacity:.38"></div>
<div style="position:absolute;left:921.7px;top:65.8px;width:5.1px;height:1.1px;background:#d9d6a8;opacity:.38"></div>
<div style="position:absolute;left:926.8px;top:65.8px;width:0.8px;height:1.1px;background:#cc76c8;opacity:.38"></div>
<div style="position:absolute;left:927.7px;top:65.8px;width:4.2px;height:1.1px;background:#5a98cf;opacity:.38"></div>
<div style="position:absolute;left:932.8px;top:65.8px;width:4.2px;height:1.1px;background:#54bea5;opacity:.38"></div>
<div style="position:absolute;left:937.0px;top:65.8px;width:1.7px;height:1.1px;background:#3a9ff0;opacity:.38"></div>
<div style="position:absolute;left:938.7px;top:65.8px;width:0.8px;height:1.1px;background:#cc76c8;opacity:.38"></div>
<div style="position:absolute;left:939.6px;top:65.8px;width:0.8px;height:1.1px;background:#d4d4d4;opacity:.38"></div>
<div style="position:absolute;left:920.0px;top:67.4px;width:0.8px;height:1.1px;background:#f0cf45;opacity:.38"></div>
<div style="position:absolute;left:920.0px;top:70.6px;width:5.1px;height:1.1px;background:#54bea5;opacity:.38"></div>
<div style="position:absolute;left:926.0px;top:70.6px;width:14.4px;height:1.1px;background:#d9d6a8;opacity:.38"></div>
<div style="position:absolute;left:940.4px;top:70.6px;width:0.8px;height:1.1px;background:#f0cf45;opacity:.38"></div>
<div style="position:absolute;left:941.3px;top:70.6px;width:11.0px;height:1.1px;background:#54bea5;opacity:.38"></div>
<div style="position:absolute;left:953.2px;top:70.6px;width:2.5px;height:1.1px;background:#d4d4d4;opacity:.38"></div>
<div style="position:absolute;left:955.7px;top:70.6px;width:0.8px;height:1.1px;background:#f0cf45;opacity:.38"></div>
<div style="position:absolute;left:957.4px;top:70.6px;width:4.2px;height:1.1px;background:#c088bb;opacity:.38"></div>
<div style="position:absolute;left:962.5px;top:70.6px;width:1.7px;height:1.1px;background:#f0cf45;opacity:.38"></div>
<div style="position:absolute;left:920.0px;top:73.8px;width:4.2px;height:1.1px;background:#5a98cf;opacity:.38"></div>
<div style="position:absolute;left:925.1px;top:73.8px;width:4.2px;height:1.1px;background:#54bea5;opacity:.38"></div>
<div style="position:absolute;left:930.2px;top:73.8px;width:6.0px;height:1.1px;background:#5a98cf;opacity:.38"></div>
<div style="position:absolute;left:937.0px;top:73.8px;width:11.9px;height:1.1px;background:#54bea5;opacity:.38"></div>
<div style="position:absolute;left:949.8px;top:73.8px;width:0.8px;height:1.1px;background:#f0cf45;opacity:.38"></div>
<div style="position:absolute;left:921.7px;top:75.4px;width:4.2px;height:1.1px;background:#5a98cf;opacity:.38"></div>
<div style="position:absolute;left:926.8px;top:75.4px;width:4.2px;height:1.1px;background:#54bea5;opacity:.38"></div>
<div style="position:absolute;left:931.1px;top:75.4px;width:0.8px;height:1.1px;background:#cc76c8;opacity:.38"></div>
<div style="position:absolute;left:931.9px;top:75.4px;width:0.8px;height:1.1px;background:#3a9ff0;opacity:.38"></div>
<div style="position:absolute;left:932.8px;top:75.4px;width:2.5px;height:1.1px;background:#54bea5;opacity:.38"></div>
<div style="position:absolute;left:935.3px;top:75.4px;width:0.8px;height:1.1px;background:#d4d4d4;opacity:.38"></div>
<div style="position:absolute;left:937.0px;top:75.4px;width:2.5px;height:1.1px;background:#d4d4d4;opacity:.38"></div>
<div style="position:absolute;left:939.6px;top:75.4px;width:0.8px;height:1.1px;background:#3a9ff0;opacity:.38"></div>
<div style="position:absolute;left:940.4px;top:75.4px;width:0.8px;height:1.1px;background:#cc76c8;opacity:.38"></div>
<div style="position:absolute;left:942.1px;top:75.4px;width:0.8px;height:1.1px;background:#d4d4d4;opacity:.38"></div>
<div style="position:absolute;left:943.8px;top:75.4px;width:4.2px;height:1.1px;background:#5a98cf;opacity:.38"></div>
<div style="position:absolute;left:948.1px;top:75.4px;width:0.8px;height:1.1px;background:#cc76c8;opacity:.38"></div>
<div style="position:absolute;left:948.9px;top:75.4px;width:3.4px;height:1.1px;background:#d4d4d4;opacity:.38"></div>
<div style="position:absolute;left:953.2px;top:75.4px;width:2.5px;height:1.1px;background:#d4d4d4;opacity:.38"></div>
<div style="position:absolute;left:955.7px;top:75.4px;width:0.8px;height:1.1px;background:#cc76c8;opacity:.38"></div>
<div style="position:absolute;left:956.6px;top:75.4px;width:0.8px;height:1.1px;background:#d4d4d4;opacity:.38"></div>
<div style="position:absolute;left:921.7px;top:78.6px;width:7.6px;height:1.1px;background:#5a98cf;opacity:.38"></div>
<div style="position:absolute;left:921.7px;top:80.2px;width:4.2px;height:1.1px;background:#54bea5;opacity:.38"></div>
<div style="position:absolute;left:926.0px;top:80.2px;width:0.8px;height:1.1px;background:#d4d4d4;opacity:.38"></div>
<div style="position:absolute;left:926.8px;top:80.2px;width:4.2px;height:1.1px;background:#54bea5;opacity:.38"></div>
<div style="position:absolute;left:931.1px;top:80.2px;width:0.8px;height:1.1px;background:#d4d4d4;opacity:.38"></div>
<div style="position:absolute;left:932.8px;top:80.2px;width:9.3px;height:1.1px;background:#d9d6a8;opacity:.38"></div>
<div style="position:absolute;left:942.1px;top:80.2px;width:1.7px;height:1.1px;background:#cc76c8;opacity:.38"></div>
<div style="position:absolute;left:944.7px;top:80.2px;width:1.7px;height:1.1px;background:#d4d4d4;opacity:.38"></div>
<div style="position:absolute;left:947.2px;top:80.2px;width:9.3px;height:1.1px;background:#54bea5;opacity:.38"></div>
<div style="position:absolute;left:956.6px;top:80.2px;width:1.7px;height:1.1px;background:#cc76c8;opacity:.38"></div>
<div style="position:absolute;left:958.3px;top:80.2px;width:0.8px;height:1.1px;background:#d4d4d4;opacity:.38"></div>
<div style="position:absolute;left:920.0px;top:81.8px;width:0.8px;height:1.1px;background:#f0cf45;opacity:.38"></div>
<div style="position:absolute;left:920.0px;top:85.0px;width:4.2px;height:1.1px;background:#5a98cf;opacity:.38"></div>
<div style="position:absolute;left:925.1px;top:85.0px;width:9.3px;height:1.1px;background:#54bea5;opacity:.38"></div>
<div style="position:absolute;left:935.3px;top:85.0px;width:6.0px;height:1.1px;background:#5a98cf;opacity:.38"></div>
<div style="position:absolute;left:942.1px;top:85.0px;width:4.2px;height:1.1px;background:#54bea5;opacity:.38"></div>
<div style="position:absolute;left:946.4px;top:85.0px;width:0.8px;height:1.1px;background:#d4d4d4;opacity:.38"></div>
<div style="position:absolute;left:947.2px;top:85.0px;width:4.2px;height:1.1px;background:#54bea5;opacity:.38"></div>
<div style="position:absolute;left:951.5px;top:85.0px;width:0.8px;height:1.1px;background:#d4d4d4;opacity:.38"></div>
<div style="position:absolute;left:953.2px;top:85.0px;width:0.8px;height:1.1px;background:#f0cf45;opacity:.38"></div>
<div style="position:absolute;left:921.7px;top:86.6px;width:7.6px;height:1.1px;background:#5a98cf;opacity:.38"></div>
<div style="position:absolute;left:921.7px;top:88.2px;width:3.4px;height:1.1px;background:#5a98cf;opacity:.38"></div>
<div style="position:absolute;left:926.0px;top:88.2px;width:7.6px;height:1.1px;background:#d9d6a8;opacity:.38"></div>
<div style="position:absolute;left:933.6px;top:88.2px;width:1.7px;height:1.1px;background:#cc76c8;opacity:.38"></div>
<div style="position:absolute;left:936.2px;top:88.2px;width:0.8px;height:1.1px;background:#cc76c8;opacity:.38"></div>
<div style="position:absolute;left:923.4px;top:89.8px;width:4.2px;height:1.1px;background:#5a98cf;opacity:.38"></div>
<div style="position:absolute;left:927.7px;top:89.8px;width:0.8px;height:1.1px;background:#d4d4d4;opacity:.38"></div>
<div style="position:absolute;left:928.5px;top:89.8px;width:7.6px;height:1.1px;background:#d9d6a8;opacity:.38"></div>
<div style="position:absolute;left:936.2px;top:89.8px;width:1.7px;height:1.1px;background:#3a9ff0;opacity:.38"></div>
<div style="position:absolute;left:937.9px;top:89.8px;width:0.8px;height:1.1px;background:#d4d4d4;opacity:.38"></div>
<div style="position:absolute;left:923.4px;top:91.4px;width:20.4px;height:1.1px;background:#54bea5;opacity:.38"></div>
<div style="position:absolute;left:943.8px;top:91.4px;width:0.8px;height:1.1px;background:#d4d4d4;opacity:.38"></div>
<div style="position:absolute;left:944.7px;top:91.4px;width:8.5px;height:1.1px;background:#d9d6a8;opacity:.38"></div>
<div style="position:absolute;left:953.2px;top:91.4px;width:1.7px;height:1.1px;background:#3a9ff0;opacity:.38"></div>
<div style="position:absolute;left:954.9px;top:91.4px;width:0.8px;height:1.1px;background:#d4d4d4;opacity:.38"></div>
<div style="position:absolute;left:923.4px;top:94.6px;width:14.4px;height:1.1px;background:#54bea5;opacity:.38"></div>
<div style="position:absolute;left:937.9px;top:94.6px;width:8.5px;height:1.1px;background:#d4d4d4;opacity:.38"></div>
<div style="position:absolute;left:946.4px;top:94.6px;width:14.4px;height:1.1px;background:#d9d6a8;opacity:.38"></div>
<div style="position:absolute;left:960.8px;top:94.6px;width:1.7px;height:1.1px;background:#3a9ff0;opacity:.38"></div>
<div style="position:absolute;left:962.5px;top:94.6px;width:0.8px;height:1.1px;background:#d4d4d4;opacity:.38"></div>
<div style="position:absolute;left:963.4px;top:94.6px;width:3.4px;height:1.1px;background:#d9d6a8;opacity:.38"></div>
<div style="position:absolute;left:966.8px;top:94.6px;width:0.8px;height:1.1px;background:#3a9ff0;opacity:.38"></div>
<div style="position:absolute;left:967.6px;top:94.6px;width:0.8px;height:1.1px;background:#f0cf45;opacity:.38"></div>
<div style="position:absolute;left:968.5px;top:94.6px;width:6.0px;height:1.1px;background:#d4d4d4;opacity:.38"></div>
<div style="position:absolute;left:974.4px;top:94.6px;width:0.8px;height:1.1px;background:#f0cf45;opacity:.38"></div>
<div style="position:absolute;left:976.1px;top:94.6px;width:0.8px;height:1.1px;background:#f0cf45;opacity:.38"></div>
<div style="position:absolute;left:925.1px;top:96.2px;width:4.2px;height:1.1px;background:#d9d6a8;opacity:.38"></div>
<div style="position:absolute;left:929.4px;top:96.2px;width:0.8px;height:1.1px;background:#cc76c8;opacity:.38"></div>
<div style="position:absolute;left:930.2px;top:96.2px;width:6.8px;height:1.1px;background:#c99078;opacity:.38"></div>
<div style="position:absolute;left:937.9px;top:96.2px;width:6.0px;height:1.1px;background:#c99078;opacity:.38"></div>
<div style="position:absolute;left:944.7px;top:96.2px;width:1.7px;height:1.1px;background:#c99078;opacity:.38"></div>
<div style="position:absolute;left:946.4px;top:96.2px;width:6.0px;height:1.1px;background:#9acff5;opacity:.38"></div>
<div style="position:absolute;left:952.3px;top:96.2px;width:0.8px;height:1.1px;background:#d4d4d4;opacity:.38"></div>
<div style="position:absolute;left:953.2px;top:96.2px;width:6.8px;height:1.1px;background:#d9d6a8;opacity:.38"></div>
<div style="position:absolute;left:960.0px;top:96.2px;width:1.7px;height:1.1px;background:#f0cf45;opacity:.38"></div>
<div style="position:absolute;left:961.7px;top:96.2px;width:1.7px;height:1.1px;background:#c99078;opacity:.38"></div>
<div style="position:absolute;left:963.4px;top:96.2px;width:0.8px;height:1.1px;background:#cc76c8;opacity:.38"></div>
<div style="position:absolute;left:964.2px;top:96.2px;width:0.8px;height:1.1px;background:#d4d4d4;opacity:.38"></div>
<div style="position:absolute;left:923.4px;top:97.8px;width:0.8px;height:1.1px;background:#f0cf45;opacity:.38"></div>
<div style="position:absolute;left:924.3px;top:97.8px;width:0.8px;height:1.1px;background:#3a9ff0;opacity:.38"></div>
<div style="position:absolute;left:925.1px;top:97.8px;width:0.8px;height:1.1px;background:#d4d4d4;opacity:.38"></div>
<div style="position:absolute;left:923.4px;top:99.4px;width:14.4px;height:1.1px;background:#54bea5;opacity:.38"></div>
<div style="position:absolute;left:937.9px;top:99.4px;width:17.0px;height:1.1px;background:#d4d4d4;opacity:.38"></div>
<div style="position:absolute;left:954.9px;top:99.4px;width:5.1px;height:1.1px;background:#d9d6a8;opacity:.38"></div>
<div style="position:absolute;left:960.0px;top:99.4px;width:0.8px;height:1.1px;background:#3a9ff0;opacity:.38"></div>
<div style="position:absolute;left:960.8px;top:99.4px;width:0.8px;height:1.1px;background:#f0cf45;opacity:.38"></div>
<div style="position:absolute;left:961.7px;top:99.4px;width:4.2px;height:1.1px;background:#d4d4d4;opacity:.38"></div>
<div style="position:absolute;left:965.9px;top:99.4px;width:0.8px;height:1.1px;background:#f0cf45;opacity:.38"></div>
<div style="position:absolute;left:967.6px;top:99.4px;width:0.8px;height:1.1px;background:#f0cf45;opacity:.38"></div>
<div style="position:absolute;left:925.1px;top:101.0px;width:4.2px;height:1.1px;background:#d9d6a8;opacity:.38"></div>
<div style="position:absolute;left:929.4px;top:101.0px;width:0.8px;height:1.1px;background:#cc76c8;opacity:.38"></div>
<div style="position:absolute;left:930.2px;top:101.0px;width:6.8px;height:1.1px;background:#c99078;opacity:.38"></div>
<div style="position:absolute;left:937.9px;top:101.0px;width:1.7px;height:1.1px;background:#c99078;opacity:.38"></div>
<div style="position:absolute;left:940.4px;top:101.0px;width:2.5px;height:1.1px;background:#c99078;opacity:.38"></div>
<div style="position:absolute;left:943.8px;top:101.0px;width:5.1px;height:1.1px;background:#c99078;opacity:.38"></div>
<div style="position:absolute;left:949.8px;top:101.0px;width:1.7px;height:1.1px;background:#c99078;opacity:.38"></div>
<div style="position:absolute;left:951.5px;top:101.0px;width:4.2px;height:1.1px;background:#9acff5;opacity:.38"></div>
<div style="position:absolute;left:955.7px;top:101.0px;width:0.8px;height:1.1px;background:#d4d4d4;opacity:.38"></div>
<div style="position:absolute;left:956.6px;top:101.0px;width:6.8px;height:1.1px;background:#d9d6a8;opacity:.38"></div>
<div style="position:absolute;left:963.4px;top:101.0px;width:1.7px;height:1.1px;background:#f0cf45;opacity:.38"></div>
<div style="position:absolute;left:965.1px;top:101.0px;width:1.7px;height:1.1px;background:#c99078;opacity:.38"></div>
<div style="position:absolute;left:966.8px;top:101.0px;width:0.8px;height:1.1px;background:#cc76c8;opacity:.38"></div>
<div style="position:absolute;left:967.6px;top:101.0px;width:0.8px;height:1.1px;background:#d4d4d4;opacity:.38"></div>
<div style="position:absolute;left:923.4px;top:102.6px;width:0.8px;height:1.1px;background:#f0cf45;opacity:.38"></div>
<div style="position:absolute;left:924.3px;top:102.6px;width:0.8px;height:1.1px;background:#3a9ff0;opacity:.38"></div>
<div style="position:absolute;left:925.1px;top:102.6px;width:0.8px;height:1.1px;background:#d4d4d4;opacity:.38"></div>
<div style="position:absolute;left:923.4px;top:104.2px;width:14.4px;height:1.1px;background:#54bea5;opacity:.38"></div>
<div style="position:absolute;left:937.9px;top:104.2px;width:9.3px;height:1.1px;background:#d4d4d4;opacity:.38"></div>
<div style="position:absolute;left:947.2px;top:104.2px;width:5.1px;height:1.1px;background:#d9d6a8;opacity:.38"></div>
<div style="position:absolute;left:952.3px;top:104.2px;width:0.8px;height:1.1px;background:#3a9ff0;opacity:.38"></div>
<div style="position:absolute;left:953.2px;top:104.2px;width:0.8px;height:1.1px;background:#f0cf45;opacity:.38"></div>
<div style="position:absolute;left:954.0px;top:104.2px;width:4.2px;height:1.1px;background:#d4d4d4;opacity:.38"></div>
<div style="position:absolute;left:958.3px;top:104.2px;width:0.8px;height:1.1px;background:#f0cf45;opacity:.38"></div>
<div style="position:absolute;left:960.0px;top:104.2px;width:0.8px;height:1.1px;background:#f0cf45;opacity:.38"></div>
<div style="position:absolute;left:925.1px;top:105.8px;width:4.2px;height:1.1px;background:#d9d6a8;opacity:.38"></div>
<div style="position:absolute;left:929.4px;top:105.8px;width:0.8px;height:1.1px;background:#cc76c8;opacity:.38"></div>
<div style="position:absolute;left:930.2px;top:105.8px;width:6.8px;height:1.1px;background:#c99078;opacity:.38"></div>
<div style="position:absolute;left:937.9px;top:105.8px;width:3.4px;height:1.1px;background:#c99078;opacity:.38"></div>
<div style="position:absolute;left:942.1px;top:105.8px;width:1.7px;height:1.1px;background:#c99078;opacity:.38"></div>
<div style="position:absolute;left:944.7px;top:105.8px;width:1.7px;height:1.1px;background:#c99078;opacity:.38"></div>
<div style="position:absolute;left:947.2px;top:105.8px;width:7.6px;height:1.1px;background:#c99078;opacity:.38"></div>
<div style="position:absolute;left:955.7px;top:105.8px;width:3.4px;height:1.1px;background:#c99078;opacity:.38"></div>
<div style="position:absolute;left:960.0px;top:105.8px;width:1.7px;height:1.1px;background:#c99078;opacity:.38"></div>
<div style="position:absolute;left:961.7px;top:105.8px;width:4.2px;height:1.1px;background:#9acff5;opacity:.38"></div>
<div style="position:absolute;left:965.9px;top:105.8px;width:0.8px;height:1.1px;background:#d4d4d4;opacity:.38"></div>
<div style="position:absolute;left:966.8px;top:105.8px;width:6.8px;height:1.1px;background:#d9d6a8;opacity:.38"></div>
<div style="position:absolute;left:973.6px;top:105.8px;width:1.7px;height:1.1px;background:#f0cf45;opacity:.38"></div>
<div style="position:absolute;left:975.3px;top:105.8px;width:1.7px;height:1.1px;background:#c99078;opacity:.38"></div>
<div style="position:absolute;left:977.0px;top:105.8px;width:0.8px;height:1.1px;background:#cc76c8;opacity:.38"></div>
<div style="position:absolute;left:977.8px;top:105.8px;width:0.8px;height:1.1px;background:#d4d4d4;opacity:.38"></div>
<div style="position:absolute;left:920.0px;top:45.0px;width:5.1px;height:1.1px;background:#5a98cf;opacity:.38"></div>
<div style="position:absolute;left:926.0px;top:45.0px;width:35.7px;height:1.1px;background:#c99078;opacity:.38"></div>
<div style="position:absolute;left:961.7px;top:45.0px;width:0.8px;height:1.1px;background:#d4d4d4;opacity:.38"></div>
<div style="position:absolute;left:920.0px;top:46.6px;width:5.1px;height:1.1px;background:#5a98cf;opacity:.38"></div>
<div style="position:absolute;left:926.0px;top:46.6px;width:44.2px;height:1.1px;background:#c99078;opacity:.38"></div>
<div style="position:absolute;left:970.2px;top:46.6px;width:0.8px;height:1.1px;background:#d4d4d4;opacity:.38"></div>
<div style="position:absolute;left:920.0px;top:48.2px;width:5.1px;height:1.1px;background:#5a98cf;opacity:.38"></div>
<div style="position:absolute;left:926.0px;top:48.2px;width:26.3px;height:1.1px;background:#c99078;opacity:.38"></div>
<div style="position:absolute;left:952.3px;top:48.2px;width:0.8px;height:1.1px;background:#d4d4d4;opacity:.38"></div>
<div style="position:absolute;left:925.1px;top:107.4px;width:7.6px;height:1.1px;background:#d9d6a8;opacity:.38"></div>
<div style="position:absolute;left:932.8px;top:107.4px;width:11.9px;height:1.1px;background:#d4d4d4;opacity:.38"></div>
<div style="position:absolute;left:944.7px;top:107.4px;width:11.0px;height:1.1px;background:#5a98cf;opacity:.38"></div>
<div style="position:absolute;left:925.1px;top:109.0px;width:4.2px;height:1.1px;background:#54bea5;opacity:.38"></div>
<div style="position:absolute;left:930.2px;top:109.0px;width:2.5px;height:1.1px;background:#d4d4d4;opacity:.38"></div>
<div style="position:absolute;left:926.8px;top:110.6px;width:2.5px;height:1.1px;background:#d4d4d4;opacity:.38"></div>
<div style="position:absolute;left:930.2px;top:110.6px;width:10.2px;height:1.1px;background:#5a98cf;opacity:.38"></div>
<div style="position:absolute;left:940.4px;top:110.6px;width:11.9px;height:1.1px;background:#d9d6a8;opacity:.38"></div>
<div style="position:absolute;left:923.4px;top:112.2px;width:11.0px;height:1.1px;background:#f0cf45;opacity:.38"></div>
<div style="position:absolute;left:923.4px;top:113.8px;width:3.4px;height:1.1px;background:#c99078;opacity:.38"></div>
<div style="position:absolute;left:926.8px;top:113.8px;width:2.5px;height:1.1px;background:#c99078;opacity:.38"></div>
<div style="position:absolute;left:930.2px;top:113.8px;width:8.5px;height:1.1px;background:#d4d4d4;opacity:.38"></div>
<div style="position:absolute;left:939.6px;top:113.8px;width:10.2px;height:1.1px;background:#5a98cf;opacity:.38"></div>
<div style="position:absolute;left:925.1px;top:117.0px;width:10.2px;height:1.1px;background:#5a98cf;opacity:.38"></div>
<div style="position:absolute;left:923.4px;top:118.6px;width:11.0px;height:1.1px;background:#d9d6a8;opacity:.38"></div>
<div style="position:absolute;left:935.3px;top:118.6px;width:10.2px;height:1.1px;background:#5a98cf;opacity:.38"></div>
<div style="position:absolute;left:946.4px;top:118.6px;width:3.4px;height:1.1px;background:#54bea5;opacity:.38"></div>
<div style="position:absolute;left:949.8px;top:118.6px;width:8.5px;height:1.1px;background:#f0cf45;opacity:.38"></div>
<div style="position:absolute;left:923.4px;top:123.4px;width:11.9px;height:1.1px;background:#f0cf45;opacity:.38"></div>
<div style="position:absolute;left:936.2px;top:123.4px;width:5.1px;height:1.1px;background:#54bea5;opacity:.38"></div>
<div style="position:absolute;left:941.3px;top:123.4px;width:4.2px;height:1.1px;background:#5a98cf;opacity:.38"></div>
<div style="position:absolute;left:926.8px;top:125.0px;width:11.9px;height:1.1px;background:#54bea5;opacity:.38"></div>
<div style="position:absolute;left:938.7px;top:125.0px;width:4.2px;height:1.1px;background:#5a98cf;opacity:.38"></div>
<div style="position:absolute;left:943.8px;top:125.0px;width:9.3px;height:1.1px;background:#d4d4d4;opacity:.38"></div>
<div style="position:absolute;left:926.8px;top:126.6px;width:5.1px;height:1.1px;background:#d4d4d4;opacity:.38"></div>
<div style="position:absolute;left:931.9px;top:126.6px;width:5.1px;height:1.1px;background:#d4d4d4;opacity:.38"></div>
<div style="position:absolute;left:923.4px;top:128.2px;width:6.0px;height:1.1px;background:#54bea5;opacity:.38"></div>
<div style="position:absolute;left:925.1px;top:129.8px;width:11.9px;height:1.1px;background:#f0cf45;opacity:.38"></div>
<div style="position:absolute;left:937.0px;top:129.8px;width:3.4px;height:1.1px;background:#5a98cf;opacity:.38"></div>
<div style="position:absolute;left:941.3px;top:129.8px;width:8.5px;height:1.1px;background:#d4d4d4;opacity:.38"></div>
<div style="position:absolute;left:923.4px;top:131.4px;width:11.0px;height:1.1px;background:#f0cf45;opacity:.38"></div>
<div style="position:absolute;left:926.8px;top:133.0px;width:11.9px;height:1.1px;background:#c99078;opacity:.38"></div>
<div style="position:absolute;left:923.4px;top:134.6px;width:11.0px;height:1.1px;background:#c99078;opacity:.38"></div>
<div style="position:absolute;left:935.3px;top:134.6px;width:8.5px;height:1.1px;background:#c99078;opacity:.38"></div>
<div style="position:absolute;left:923.4px;top:136.2px;width:4.2px;height:1.1px;background:#d9d6a8;opacity:.38"></div>
<div style="position:absolute;left:928.5px;top:136.2px;width:11.0px;height:1.1px;background:#f0cf45;opacity:.38"></div>
<div style="position:absolute;left:925.1px;top:137.8px;width:4.2px;height:1.1px;background:#5a98cf;opacity:.38"></div>
<div style="position:absolute;left:929.4px;top:137.8px;width:2.5px;height:1.1px;background:#d9d6a8;opacity:.38"></div>
<div style="position:absolute;left:932.8px;top:137.8px;width:9.3px;height:1.1px;background:#54bea5;opacity:.38"></div>
<div style="position:absolute;left:942.1px;top:137.8px;width:7.6px;height:1.1px;background:#d9d6a8;opacity:.38"></div>
<div style="position:absolute;left:923.4px;top:139.4px;width:6.0px;height:1.1px;background:#54bea5;opacity:.38"></div>
<div style="position:absolute;left:930.2px;top:139.4px;width:10.2px;height:1.1px;background:#d4d4d4;opacity:.38"></div>
<div style="position:absolute;left:926.8px;top:141.0px;width:11.9px;height:1.1px;background:#54bea5;opacity:.38"></div>
<div style="position:absolute;left:939.6px;top:141.0px;width:11.0px;height:1.1px;background:#f0cf45;opacity:.38"></div>
<div style="position:absolute;left:926.8px;top:142.6px;width:4.2px;height:1.1px;background:#6a9955;opacity:.38"></div>
<div style="position:absolute;left:931.9px;top:142.6px;width:6.8px;height:1.1px;background:#6a9955;opacity:.38"></div>
<div style="position:absolute;left:939.6px;top:142.6px;width:5.1px;height:1.1px;background:#6a9955;opacity:.38"></div>
<div style="position:absolute;left:945.5px;top:142.6px;width:2.5px;height:1.1px;background:#6a9955;opacity:.38"></div>
<div style="position:absolute;left:948.9px;top:142.6px;width:5.1px;height:1.1px;background:#6a9955;opacity:.38"></div>
<div style="position:absolute;left:954.9px;top:142.6px;width:2.5px;height:1.1px;background:#6a9955;opacity:.38"></div>
<div style="position:absolute;left:958.3px;top:142.6px;width:5.1px;height:1.1px;background:#6a9955;opacity:.38"></div>
<div style="position:absolute;left:926.8px;top:144.2px;width:6.8px;height:1.1px;background:#6a9955;opacity:.38"></div>
<div style="position:absolute;left:934.5px;top:144.2px;width:4.2px;height:1.1px;background:#6a9955;opacity:.38"></div>
<div style="position:absolute;left:939.6px;top:144.2px;width:6.8px;height:1.1px;background:#6a9955;opacity:.38"></div>
<div style="position:absolute;left:947.2px;top:144.2px;width:2.5px;height:1.1px;background:#6a9955;opacity:.38"></div>
<div style="position:absolute;left:950.6px;top:144.2px;width:5.1px;height:1.1px;background:#6a9955;opacity:.38"></div>
<div style="position:absolute;left:956.6px;top:144.2px;width:1.7px;height:1.1px;background:#6a9955;opacity:.38"></div>
<div style="position:absolute;left:959.1px;top:144.2px;width:6.8px;height:1.1px;background:#6a9955;opacity:.38"></div>
<div style="position:absolute;left:926.8px;top:145.8px;width:2.5px;height:1.1px;background:#6a9955;opacity:.38"></div>
<div style="position:absolute;left:930.2px;top:145.8px;width:2.5px;height:1.1px;background:#6a9955;opacity:.38"></div>
<div style="position:absolute;left:933.6px;top:145.8px;width:4.2px;height:1.1px;background:#6a9955;opacity:.38"></div>
<div style="position:absolute;left:938.7px;top:145.8px;width:5.1px;height:1.1px;background:#6a9955;opacity:.38"></div>
<div style="position:absolute;left:944.7px;top:145.8px;width:6.0px;height:1.1px;background:#6a9955;opacity:.38"></div>
<div style="position:absolute;left:951.5px;top:145.8px;width:1.7px;height:1.1px;background:#6a9955;opacity:.38"></div>
<div style="position:absolute;left:954.0px;top:145.8px;width:5.1px;height:1.1px;background:#6a9955;opacity:.38"></div>
<div style="position:absolute;left:960.0px;top:145.8px;width:1.7px;height:1.1px;background:#6a9955;opacity:.38"></div>
<div style="position:absolute;left:926.8px;top:147.4px;width:5.1px;height:1.1px;background:#6a9955;opacity:.38"></div>
<div style="position:absolute;left:932.8px;top:147.4px;width:5.1px;height:1.1px;background:#6a9955;opacity:.38"></div>
<div style="position:absolute;left:938.7px;top:147.4px;width:5.1px;height:1.1px;background:#6a9955;opacity:.38"></div>
<div style="position:absolute;left:944.7px;top:147.4px;width:4.2px;height:1.1px;background:#6a9955;opacity:.38"></div>
<div style="position:absolute;left:949.8px;top:147.4px;width:6.8px;height:1.1px;background:#6a9955;opacity:.38"></div>
<div style="position:absolute;left:957.4px;top:147.4px;width:6.8px;height:1.1px;background:#6a9955;opacity:.38"></div>
<div style="position:absolute;left:965.1px;top:147.4px;width:1.7px;height:1.1px;background:#6a9955;opacity:.38"></div>
<div style="position:absolute;left:967.6px;top:147.4px;width:5.1px;height:1.1px;background:#6a9955;opacity:.38"></div>
<div style="position:absolute;left:973.6px;top:147.4px;width:1.7px;height:1.1px;background:#6a9955;opacity:.38"></div>
<div style="position:absolute;left:926.8px;top:149.0px;width:3.4px;height:1.1px;background:#6a9955;opacity:.38"></div>
<div style="position:absolute;left:931.1px;top:149.0px;width:1.7px;height:1.1px;background:#6a9955;opacity:.38"></div>
<div style="position:absolute;left:933.6px;top:149.0px;width:6.8px;height:1.1px;background:#6a9955;opacity:.38"></div>
<div style="position:absolute;left:941.3px;top:149.0px;width:1.7px;height:1.1px;background:#6a9955;opacity:.38"></div>
<div style="position:absolute;left:943.8px;top:149.0px;width:5.1px;height:1.1px;background:#6a9955;opacity:.38"></div>
<div style="position:absolute;left:949.8px;top:149.0px;width:4.2px;height:1.1px;background:#6a9955;opacity:.38"></div>
<div style="position:absolute;left:954.9px;top:149.0px;width:5.1px;height:1.1px;background:#6a9955;opacity:.38"></div>
<div style="position:absolute;left:960.8px;top:149.0px;width:1.7px;height:1.1px;background:#6a9955;opacity:.38"></div>
<div style="position:absolute;left:963.4px;top:149.0px;width:6.8px;height:1.1px;background:#6a9955;opacity:.38"></div>
<div style="position:absolute;left:926.8px;top:150.6px;width:1.7px;height:1.1px;background:#6a9955;opacity:.38"></div>
<div style="position:absolute;left:929.4px;top:150.6px;width:4.2px;height:1.1px;background:#6a9955;opacity:.38"></div>
<div style="position:absolute;left:934.5px;top:150.6px;width:3.4px;height:1.1px;background:#6a9955;opacity:.38"></div>
<div style="position:absolute;left:938.7px;top:150.6px;width:5.1px;height:1.1px;background:#6a9955;opacity:.38"></div>
<div style="position:absolute;left:944.7px;top:150.6px;width:5.1px;height:1.1px;background:#6a9955;opacity:.38"></div>
<div style="position:absolute;left:950.6px;top:150.6px;width:5.1px;height:1.1px;background:#6a9955;opacity:.38"></div>
<div style="position:absolute;left:956.6px;top:150.6px;width:5.1px;height:1.1px;background:#6a9955;opacity:.38"></div>
<div style="position:absolute;left:962.5px;top:150.6px;width:2.5px;height:1.1px;background:#6a9955;opacity:.38"></div>
<div style="position:absolute;left:965.9px;top:150.6px;width:6.0px;height:1.1px;background:#6a9955;opacity:.38"></div>
<div style="position:absolute;left:926.8px;top:152.2px;width:5.1px;height:1.1px;background:#6a9955;opacity:.38"></div>
<div style="position:absolute;left:932.8px;top:152.2px;width:5.1px;height:1.1px;background:#6a9955;opacity:.38"></div>
<div style="position:absolute;left:938.7px;top:152.2px;width:6.8px;height:1.1px;background:#6a9955;opacity:.38"></div>
<div style="position:absolute;left:946.4px;top:152.2px;width:4.2px;height:1.1px;background:#6a9955;opacity:.38"></div>
<div style="position:absolute;left:951.5px;top:152.2px;width:5.1px;height:1.1px;background:#6a9955;opacity:.38"></div>
<div style="position:absolute;left:957.4px;top:152.2px;width:2.5px;height:1.1px;background:#6a9955;opacity:.38"></div>
<div style="position:absolute;left:960.8px;top:152.2px;width:6.0px;height:1.1px;background:#6a9955;opacity:.38"></div>
<div style="position:absolute;left:967.6px;top:152.2px;width:5.1px;height:1.1px;background:#6a9955;opacity:.38"></div>
<div style="position:absolute;left:926.8px;top:153.8px;width:3.4px;height:1.1px;background:#6a9955;opacity:.38"></div>
<div style="position:absolute;left:931.1px;top:153.8px;width:5.1px;height:1.1px;background:#6a9955;opacity:.38"></div>
<div style="position:absolute;left:937.0px;top:153.8px;width:2.5px;height:1.1px;background:#6a9955;opacity:.38"></div>
<div style="position:absolute;left:940.4px;top:153.8px;width:6.8px;height:1.1px;background:#6a9955;opacity:.38"></div>
<div style="position:absolute;left:948.1px;top:153.8px;width:4.2px;height:1.1px;background:#6a9955;opacity:.38"></div>
<div style="position:absolute;left:953.2px;top:153.8px;width:2.5px;height:1.1px;background:#6a9955;opacity:.38"></div>
<div style="position:absolute;left:956.6px;top:153.8px;width:4.2px;height:1.1px;background:#6a9955;opacity:.38"></div>
<div style="position:absolute;left:961.7px;top:153.8px;width:1.7px;height:1.1px;background:#6a9955;opacity:.38"></div>
<div style="position:absolute;left:925.1px;top:155.4px;width:11.0px;height:1.1px;background:#54bea5;opacity:.38"></div>
<div style="position:absolute;left:937.0px;top:155.4px;width:5.1px;height:1.1px;background:#54bea5;opacity:.38"></div>
<div style="position:absolute;left:942.1px;top:155.4px;width:4.2px;height:1.1px;background:#54bea5;opacity:.38"></div>
<div style="position:absolute;left:926.8px;top:157.0px;width:6.0px;height:1.1px;background:#d9d6a8;opacity:.38"></div>
<div style="position:absolute;left:932.8px;top:157.0px;width:5.1px;height:1.1px;background:#f0cf45;opacity:.38"></div>
<div style="position:absolute;left:937.9px;top:157.0px;width:7.6px;height:1.1px;background:#54bea5;opacity:.38"></div>
<div style="position:absolute;left:925.1px;top:158.6px;width:11.9px;height:1.1px;background:#d9d6a8;opacity:.38"></div>
<div style="position:absolute;left:937.0px;top:158.6px;width:6.8px;height:1.1px;background:#c99078;opacity:.38"></div>
<div style="position:absolute;left:925.1px;top:160.2px;width:2.5px;height:1.1px;background:#5a98cf;opacity:.38"></div>
<div style="position:absolute;left:925.1px;top:161.8px;width:6.8px;height:1.1px;background:#c99078;opacity:.38"></div>
<div style="position:absolute;left:926.8px;top:163.4px;width:5.1px;height:1.1px;background:#54bea5;opacity:.38"></div>
<div style="position:absolute;left:928.5px;top:166.6px;width:1.7px;height:1.1px;background:#6a9955;opacity:.38"></div>
<div style="position:absolute;left:931.1px;top:166.6px;width:6.8px;height:1.1px;background:#6a9955;opacity:.38"></div>
<div style="position:absolute;left:938.7px;top:166.6px;width:2.5px;height:1.1px;background:#6a9955;opacity:.38"></div>
<div style="position:absolute;left:942.1px;top:166.6px;width:3.4px;height:1.1px;background:#6a9955;opacity:.38"></div>
<div style="position:absolute;left:946.4px;top:166.6px;width:6.8px;height:1.1px;background:#6a9955;opacity:.38"></div>
<div style="position:absolute;left:954.0px;top:166.6px;width:2.5px;height:1.1px;background:#6a9955;opacity:.38"></div>
<div style="position:absolute;left:957.4px;top:166.6px;width:6.8px;height:1.1px;background:#6a9955;opacity:.38"></div>
<div style="position:absolute;left:965.1px;top:166.6px;width:4.2px;height:1.1px;background:#6a9955;opacity:.38"></div>
<div style="position:absolute;left:970.2px;top:166.6px;width:6.8px;height:1.1px;background:#6a9955;opacity:.38"></div>
<div style="position:absolute;left:928.5px;top:168.2px;width:6.8px;height:1.1px;background:#6a9955;opacity:.38"></div>
<div style="position:absolute;left:936.2px;top:168.2px;width:3.4px;height:1.1px;background:#6a9955;opacity:.38"></div>
<div style="position:absolute;left:940.4px;top:168.2px;width:4.2px;height:1.1px;background:#6a9955;opacity:.38"></div>
<div style="position:absolute;left:945.5px;top:168.2px;width:2.5px;height:1.1px;background:#6a9955;opacity:.38"></div>
<div style="position:absolute;left:948.9px;top:168.2px;width:5.1px;height:1.1px;background:#6a9955;opacity:.38"></div>
<div style="position:absolute;left:954.9px;top:168.2px;width:5.1px;height:1.1px;background:#6a9955;opacity:.38"></div>
<div style="position:absolute;left:960.8px;top:168.2px;width:5.1px;height:1.1px;background:#6a9955;opacity:.38"></div>
<div style="position:absolute;left:966.8px;top:168.2px;width:4.2px;height:1.1px;background:#6a9955;opacity:.38"></div>
<div style="position:absolute;left:971.9px;top:168.2px;width:6.0px;height:1.1px;background:#6a9955;opacity:.38"></div>
<div style="position:absolute;left:928.5px;top:169.8px;width:3.4px;height:1.1px;background:#6a9955;opacity:.38"></div>
<div style="position:absolute;left:932.8px;top:169.8px;width:1.7px;height:1.1px;background:#6a9955;opacity:.38"></div>
<div style="position:absolute;left:935.3px;top:169.8px;width:6.8px;height:1.1px;background:#6a9955;opacity:.38"></div>
<div style="position:absolute;left:943.0px;top:169.8px;width:6.0px;height:1.1px;background:#6a9955;opacity:.38"></div>
<div style="position:absolute;left:949.8px;top:169.8px;width:2.5px;height:1.1px;background:#6a9955;opacity:.38"></div>
<div style="position:absolute;left:953.2px;top:169.8px;width:4.2px;height:1.1px;background:#6a9955;opacity:.38"></div>
<div style="position:absolute;left:958.3px;top:169.8px;width:1.7px;height:1.1px;background:#6a9955;opacity:.38"></div>
<div style="position:absolute;left:928.5px;top:171.4px;width:1.7px;height:1.1px;background:#6a9955;opacity:.38"></div>
<div style="position:absolute;left:931.1px;top:171.4px;width:6.0px;height:1.1px;background:#6a9955;opacity:.38"></div>
<div style="position:absolute;left:937.9px;top:171.4px;width:1.7px;height:1.1px;background:#6a9955;opacity:.38"></div>
<div style="position:absolute;left:940.4px;top:171.4px;width:6.8px;height:1.1px;background:#6a9955;opacity:.38"></div>
<div style="position:absolute;left:948.1px;top:171.4px;width:3.4px;height:1.1px;background:#6a9955;opacity:.38"></div>
<div style="position:absolute;left:952.3px;top:171.4px;width:1.7px;height:1.1px;background:#6a9955;opacity:.38"></div>
<div style="position:absolute;left:954.9px;top:171.4px;width:5.1px;height:1.1px;background:#6a9955;opacity:.38"></div>
<div style="position:absolute;left:960.8px;top:171.4px;width:6.8px;height:1.1px;background:#6a9955;opacity:.38"></div>
<div style="position:absolute;left:968.5px;top:171.4px;width:2.5px;height:1.1px;background:#6a9955;opacity:.38"></div>
<div style="position:absolute;left:971.9px;top:171.4px;width:1.7px;height:1.1px;background:#6a9955;opacity:.38"></div>
<div style="position:absolute;left:928.5px;top:173.0px;width:1.7px;height:1.1px;background:#6a9955;opacity:.38"></div>
<div style="position:absolute;left:931.1px;top:173.0px;width:4.2px;height:1.1px;background:#6a9955;opacity:.38"></div>
<div style="position:absolute;left:936.2px;top:173.0px;width:1.7px;height:1.1px;background:#6a9955;opacity:.38"></div>
<div style="position:absolute;left:938.7px;top:173.0px;width:3.4px;height:1.1px;background:#6a9955;opacity:.38"></div>
<div style="position:absolute;left:943.0px;top:173.0px;width:5.1px;height:1.1px;background:#6a9955;opacity:.38"></div>
<div style="position:absolute;left:948.9px;top:173.0px;width:4.2px;height:1.1px;background:#6a9955;opacity:.38"></div>
<div style="position:absolute;left:954.0px;top:173.0px;width:3.4px;height:1.1px;background:#6a9955;opacity:.38"></div>
<div style="position:absolute;left:958.3px;top:173.0px;width:5.1px;height:1.1px;background:#6a9955;opacity:.38"></div>
<div style="position:absolute;left:928.5px;top:176.2px;width:4.2px;height:1.1px;background:#54bea5;opacity:.38"></div>
<div style="position:absolute;left:933.6px;top:176.2px;width:5.1px;height:1.1px;background:#d9d6a8;opacity:.38"></div>
<div style="position:absolute;left:928.5px;top:177.8px;width:8.5px;height:1.1px;background:#d4d4d4;opacity:.38"></div>
<div style="position:absolute;left:937.0px;top:177.8px;width:6.0px;height:1.1px;background:#d9d6a8;opacity:.38"></div>
<div style="position:absolute;left:928.5px;top:181.0px;width:11.9px;height:1.1px;background:#54bea5;opacity:.38"></div>
<div style="position:absolute;left:928.5px;top:182.6px;width:8.5px;height:1.1px;background:#d4d4d4;opacity:.38"></div>
<div style="position:absolute;left:937.9px;top:182.6px;width:11.0px;height:1.1px;background:#c99078;opacity:.38"></div>
<div style="position:absolute;left:948.9px;top:182.6px;width:9.3px;height:1.1px;background:#c99078;opacity:.38"></div>
<div style="position:absolute;left:959.1px;top:182.6px;width:5.1px;height:1.1px;background:#d4d4d4;opacity:.38"></div>
<div style="position:absolute;left:926.8px;top:184.2px;width:6.8px;height:1.1px;background:#c99078;opacity:.38"></div>
<div style="position:absolute;left:933.6px;top:184.2px;width:2.5px;height:1.1px;background:#d9d6a8;opacity:.38"></div>
<div style="position:absolute;left:926.8px;top:185.8px;width:4.2px;height:1.1px;background:#c99078;opacity:.38"></div>
<div style="position:absolute;left:931.9px;top:185.8px;width:9.3px;height:1.1px;background:#c99078;opacity:.38"></div>
<div style="position:absolute;left:941.3px;top:185.8px;width:10.2px;height:1.1px;background:#d4d4d4;opacity:.38"></div>
<div style="position:absolute;left:925.1px;top:187.4px;width:4.2px;height:1.1px;background:#d9d6a8;opacity:.38"></div>
<div style="position:absolute;left:930.2px;top:187.4px;width:6.0px;height:1.1px;background:#54bea5;opacity:.38"></div>
<div style="position:absolute;left:937.0px;top:187.4px;width:9.3px;height:1.1px;background:#5a98cf;opacity:.38"></div>
<div style="position:absolute;left:947.2px;top:187.4px;width:6.0px;height:1.1px;background:#54bea5;opacity:.38"></div>
<div style="position:absolute;left:925.1px;top:189.0px;width:3.4px;height:1.1px;background:#c99078;opacity:.38"></div>
<div style="position:absolute;left:928.5px;top:189.0px;width:5.1px;height:1.1px;background:#d4d4d4;opacity:.38"></div>
<div style="position:absolute;left:933.6px;top:189.0px;width:3.4px;height:1.1px;background:#54bea5;opacity:.38"></div>
<div style="position:absolute;left:923.4px;top:192.2px;width:2.5px;height:1.1px;background:#c99078;opacity:.38"></div>
<div style="position:absolute;left:926.8px;top:193.8px;width:11.0px;height:1.1px;background:#d9d6a8;opacity:.38"></div>
<div style="position:absolute;left:928.5px;top:195.4px;width:11.9px;height:1.1px;background:#5a98cf;opacity:.38"></div>
<div style="position:absolute;left:940.4px;top:195.4px;width:6.0px;height:1.1px;background:#d9d6a8;opacity:.38"></div>
<div style="position:absolute;left:946.4px;top:195.4px;width:2.5px;height:1.1px;background:#d9d6a8;opacity:.38"></div>
<div style="position:absolute;left:948.9px;top:195.4px;width:11.9px;height:1.1px;background:#c99078;opacity:.38"></div>
<div style="position:absolute;left:926.8px;top:197.0px;width:3.4px;height:1.1px;background:#d4d4d4;opacity:.38"></div>
<div style="position:absolute;left:926.8px;top:200.2px;width:8.5px;height:1.1px;background:#c99078;opacity:.38"></div>
<div style="position:absolute;left:923.4px;top:201.8px;width:6.0px;height:1.1px;background:#f0cf45;opacity:.38"></div>
<div style="position:absolute;left:930.2px;top:201.8px;width:11.9px;height:1.1px;background:#54bea5;opacity:.38"></div>
<div style="position:absolute;left:923.4px;top:203.4px;width:11.9px;height:1.1px;background:#54bea5;opacity:.38"></div>
<div style="position:absolute;left:928.5px;top:205.0px;width:5.1px;height:1.1px;background:#d4d4d4;opacity:.38"></div>
<div style="position:absolute;left:925.1px;top:206.6px;width:7.6px;height:1.1px;background:#f0cf45;opacity:.38"></div>
<div style="position:absolute;left:933.6px;top:206.6px;width:2.5px;height:1.1px;background:#d4d4d4;opacity:.38"></div>
<div style="position:absolute;left:936.2px;top:206.6px;width:3.4px;height:1.1px;background:#d4d4d4;opacity:.38"></div>
<div style="position:absolute;left:939.6px;top:206.6px;width:6.0px;height:1.1px;background:#5a98cf;opacity:.38"></div>
<div style="position:absolute;left:926.8px;top:208.2px;width:8.5px;height:1.1px;background:#54bea5;opacity:.38"></div>
<div style="position:absolute;left:936.2px;top:208.2px;width:11.0px;height:1.1px;background:#d4d4d4;opacity:.38"></div>
<div style="position:absolute;left:930.2px;top:209.8px;width:4.2px;height:1.1px;background:#6a9955;opacity:.38"></div>
<div style="position:absolute;left:935.3px;top:209.8px;width:3.4px;height:1.1px;background:#6a9955;opacity:.38"></div>
<div style="position:absolute;left:939.6px;top:209.8px;width:6.0px;height:1.1px;background:#6a9955;opacity:.38"></div>
<div style="position:absolute;left:946.4px;top:209.8px;width:5.1px;height:1.1px;background:#6a9955;opacity:.38"></div>
<div style="position:absolute;left:952.3px;top:209.8px;width:3.4px;height:1.1px;background:#6a9955;opacity:.38"></div>
<div style="position:absolute;left:956.6px;top:209.8px;width:4.2px;height:1.1px;background:#6a9955;opacity:.38"></div>
<div style="position:absolute;left:961.7px;top:209.8px;width:4.2px;height:1.1px;background:#6a9955;opacity:.38"></div>
<div style="position:absolute;left:966.8px;top:209.8px;width:4.2px;height:1.1px;background:#6a9955;opacity:.38"></div>
<div style="position:absolute;left:930.2px;top:211.4px;width:5.1px;height:1.1px;background:#6a9955;opacity:.38"></div>
<div style="position:absolute;left:936.2px;top:211.4px;width:2.5px;height:1.1px;background:#6a9955;opacity:.38"></div>
<div style="position:absolute;left:939.6px;top:211.4px;width:3.4px;height:1.1px;background:#6a9955;opacity:.38"></div>
<div style="position:absolute;left:943.8px;top:211.4px;width:1.7px;height:1.1px;background:#6a9955;opacity:.38"></div>
<div style="position:absolute;left:946.4px;top:211.4px;width:4.2px;height:1.1px;background:#6a9955;opacity:.38"></div>
<div style="position:absolute;left:951.5px;top:211.4px;width:1.7px;height:1.1px;background:#6a9955;opacity:.38"></div>
<div style="position:absolute;left:954.0px;top:211.4px;width:3.4px;height:1.1px;background:#6a9955;opacity:.38"></div>
<div style="position:absolute;left:958.3px;top:211.4px;width:4.2px;height:1.1px;background:#6a9955;opacity:.38"></div>
<div style="position:absolute;left:963.4px;top:211.4px;width:1.7px;height:1.1px;background:#6a9955;opacity:.38"></div>
<div style="position:absolute;left:965.9px;top:211.4px;width:6.8px;height:1.1px;background:#6a9955;opacity:.38"></div>
<div style="position:absolute;left:973.6px;top:211.4px;width:5.1px;height:1.1px;background:#6a9955;opacity:.38"></div>
<div style="position:absolute;left:979.5px;top:211.4px;width:4.2px;height:1.1px;background:#6a9955;opacity:.38"></div>
<div style="position:absolute;left:930.2px;top:213.0px;width:4.2px;height:1.1px;background:#6a9955;opacity:.38"></div>
<div style="position:absolute;left:935.3px;top:213.0px;width:2.5px;height:1.1px;background:#6a9955;opacity:.38"></div>
<div style="position:absolute;left:938.7px;top:213.0px;width:2.5px;height:1.1px;background:#6a9955;opacity:.38"></div>
<div style="position:absolute;left:942.1px;top:213.0px;width:1.7px;height:1.1px;background:#6a9955;opacity:.38"></div>
<div style="position:absolute;left:944.7px;top:213.0px;width:5.1px;height:1.1px;background:#6a9955;opacity:.38"></div>
<div style="position:absolute;left:950.6px;top:213.0px;width:1.7px;height:1.1px;background:#6a9955;opacity:.38"></div>
<div style="position:absolute;left:953.2px;top:213.0px;width:2.5px;height:1.1px;background:#6a9955;opacity:.38"></div>
<div style="position:absolute;left:956.6px;top:213.0px;width:6.0px;height:1.1px;background:#6a9955;opacity:.38"></div>
<div style="position:absolute;left:963.4px;top:213.0px;width:5.1px;height:1.1px;background:#6a9955;opacity:.38"></div>
<div style="position:absolute;left:969.3px;top:213.0px;width:3.4px;height:1.1px;background:#6a9955;opacity:.38"></div>
<div style="position:absolute;left:973.6px;top:213.0px;width:3.4px;height:1.1px;background:#6a9955;opacity:.38"></div>
<div style="position:absolute;left:977.8px;top:213.0px;width:2.5px;height:1.1px;background:#6a9955;opacity:.38"></div>
<div style="position:absolute;left:930.2px;top:214.6px;width:6.0px;height:1.1px;background:#6a9955;opacity:.38"></div>
<div style="position:absolute;left:937.0px;top:214.6px;width:5.1px;height:1.1px;background:#6a9955;opacity:.38"></div>
<div style="position:absolute;left:943.0px;top:214.6px;width:3.4px;height:1.1px;background:#6a9955;opacity:.38"></div>
<div style="position:absolute;left:947.2px;top:214.6px;width:1.7px;height:1.1px;background:#6a9955;opacity:.38"></div>
<div style="position:absolute;left:949.8px;top:214.6px;width:6.0px;height:1.1px;background:#6a9955;opacity:.38"></div>
<div style="position:absolute;left:956.6px;top:214.6px;width:3.4px;height:1.1px;background:#6a9955;opacity:.38"></div>
<div style="position:absolute;left:960.8px;top:214.6px;width:2.5px;height:1.1px;background:#6a9955;opacity:.38"></div>
<div style="position:absolute;left:964.2px;top:214.6px;width:4.2px;height:1.1px;background:#6a9955;opacity:.38"></div>
<div style="position:absolute;left:930.2px;top:216.2px;width:4.2px;height:1.1px;background:#6a9955;opacity:.38"></div>
<div style="position:absolute;left:935.3px;top:216.2px;width:4.2px;height:1.1px;background:#6a9955;opacity:.38"></div>
<div style="position:absolute;left:940.4px;top:216.2px;width:1.7px;height:1.1px;background:#6a9955;opacity:.38"></div>
<div style="position:absolute;left:943.0px;top:216.2px;width:2.5px;height:1.1px;background:#6a9955;opacity:.38"></div>
<div style="position:absolute;left:946.4px;top:216.2px;width:1.7px;height:1.1px;background:#6a9955;opacity:.38"></div>
<div style="position:absolute;left:948.9px;top:216.2px;width:4.2px;height:1.1px;background:#6a9955;opacity:.38"></div>
<div style="position:absolute;left:954.0px;top:216.2px;width:6.0px;height:1.1px;background:#6a9955;opacity:.38"></div>
<div style="position:absolute;left:960.8px;top:216.2px;width:4.2px;height:1.1px;background:#6a9955;opacity:.38"></div>
<div style="position:absolute;left:965.9px;top:216.2px;width:4.2px;height:1.1px;background:#6a9955;opacity:.38"></div>
<div style="position:absolute;left:930.2px;top:217.8px;width:2.5px;height:1.1px;background:#6a9955;opacity:.38"></div>
<div style="position:absolute;left:933.6px;top:217.8px;width:4.2px;height:1.1px;background:#6a9955;opacity:.38"></div>
<div style="position:absolute;left:938.7px;top:217.8px;width:3.4px;height:1.1px;background:#6a9955;opacity:.38"></div>
<div style="position:absolute;left:943.0px;top:217.8px;width:4.2px;height:1.1px;background:#6a9955;opacity:.38"></div>
<div style="position:absolute;left:948.1px;top:217.8px;width:3.4px;height:1.1px;background:#6a9955;opacity:.38"></div>
<div style="position:absolute;left:952.3px;top:217.8px;width:1.7px;height:1.1px;background:#6a9955;opacity:.38"></div>
<div style="position:absolute;left:954.9px;top:217.8px;width:6.8px;height:1.1px;background:#6a9955;opacity:.38"></div>
<div style="position:absolute;left:962.5px;top:217.8px;width:3.4px;height:1.1px;background:#6a9955;opacity:.38"></div>
<div style="position:absolute;left:966.8px;top:217.8px;width:1.7px;height:1.1px;background:#6a9955;opacity:.38"></div>
<div style="position:absolute;left:969.3px;top:217.8px;width:3.4px;height:1.1px;background:#6a9955;opacity:.38"></div>
<div style="position:absolute;left:973.6px;top:217.8px;width:6.8px;height:1.1px;background:#6a9955;opacity:.38"></div>
<div style="position:absolute;left:930.2px;top:219.4px;width:4.2px;height:1.1px;background:#6a9955;opacity:.38"></div>
<div style="position:absolute;left:935.3px;top:219.4px;width:1.7px;height:1.1px;background:#6a9955;opacity:.38"></div>
<div style="position:absolute;left:937.9px;top:219.4px;width:2.5px;height:1.1px;background:#6a9955;opacity:.38"></div>
<div style="position:absolute;left:941.3px;top:219.4px;width:6.0px;height:1.1px;background:#6a9955;opacity:.38"></div>
<div style="position:absolute;left:948.1px;top:219.4px;width:1.7px;height:1.1px;background:#6a9955;opacity:.38"></div>
<div style="position:absolute;left:950.6px;top:219.4px;width:6.0px;height:1.1px;background:#6a9955;opacity:.38"></div>
<div style="position:absolute;left:957.4px;top:219.4px;width:3.4px;height:1.1px;background:#6a9955;opacity:.38"></div>
<div style="position:absolute;left:961.7px;top:219.4px;width:3.4px;height:1.1px;background:#6a9955;opacity:.38"></div>
<div style="position:absolute;left:965.9px;top:219.4px;width:3.4px;height:1.1px;background:#6a9955;opacity:.38"></div>
<div style="position:absolute;left:970.2px;top:219.4px;width:1.7px;height:1.1px;background:#6a9955;opacity:.38"></div>
<div style="position:absolute;left:972.7px;top:219.4px;width:4.2px;height:1.1px;background:#6a9955;opacity:.38"></div>
<div style="position:absolute;left:930.2px;top:221.0px;width:6.8px;height:1.1px;background:#6a9955;opacity:.38"></div>
<div style="position:absolute;left:937.9px;top:221.0px;width:5.1px;height:1.1px;background:#6a9955;opacity:.38"></div>
<div style="position:absolute;left:943.8px;top:221.0px;width:1.7px;height:1.1px;background:#6a9955;opacity:.38"></div>
<div style="position:absolute;left:946.4px;top:221.0px;width:3.4px;height:1.1px;background:#6a9955;opacity:.38"></div>
<div style="position:absolute;left:950.6px;top:221.0px;width:4.2px;height:1.1px;background:#6a9955;opacity:.38"></div>
<div style="position:absolute;left:955.7px;top:221.0px;width:6.8px;height:1.1px;background:#6a9955;opacity:.38"></div>
<div style="position:absolute;left:963.4px;top:221.0px;width:3.4px;height:1.1px;background:#6a9955;opacity:.38"></div>
<div style="position:absolute;left:967.6px;top:221.0px;width:6.8px;height:1.1px;background:#6a9955;opacity:.38"></div>
<div style="position:absolute;left:975.3px;top:221.0px;width:1.7px;height:1.1px;background:#6a9955;opacity:.38"></div>
<div style="position:absolute;left:930.2px;top:222.6px;width:1.7px;height:1.1px;background:#6a9955;opacity:.38"></div>
<div style="position:absolute;left:932.8px;top:222.6px;width:6.8px;height:1.1px;background:#6a9955;opacity:.38"></div>
<div style="position:absolute;left:940.4px;top:222.6px;width:6.0px;height:1.1px;background:#6a9955;opacity:.38"></div>
<div style="position:absolute;left:947.2px;top:222.6px;width:3.4px;height:1.1px;background:#6a9955;opacity:.38"></div>
<div style="position:absolute;left:951.5px;top:222.6px;width:6.0px;height:1.1px;background:#6a9955;opacity:.38"></div>
<div style="position:absolute;left:958.3px;top:222.6px;width:2.5px;height:1.1px;background:#6a9955;opacity:.38"></div>
<div style="position:absolute;left:961.7px;top:222.6px;width:2.5px;height:1.1px;background:#6a9955;opacity:.38"></div>
<div style="position:absolute;left:965.1px;top:222.6px;width:3.4px;height:1.1px;background:#6a9955;opacity:.38"></div>
<div style="position:absolute;left:969.3px;top:222.6px;width:4.2px;height:1.1px;background:#6a9955;opacity:.38"></div>
<div style="position:absolute;left:974.4px;top:222.6px;width:5.1px;height:1.1px;background:#6a9955;opacity:.38"></div>
<div style="position:absolute;left:980.4px;top:222.6px;width:3.4px;height:1.1px;background:#6a9955;opacity:.38"></div>
<div style="position:absolute;left:930.2px;top:224.2px;width:3.4px;height:1.1px;background:#6a9955;opacity:.38"></div>
<div style="position:absolute;left:934.5px;top:224.2px;width:6.8px;height:1.1px;background:#6a9955;opacity:.38"></div>
<div style="position:absolute;left:942.1px;top:224.2px;width:4.2px;height:1.1px;background:#6a9955;opacity:.38"></div>
<div style="position:absolute;left:947.2px;top:224.2px;width:1.7px;height:1.1px;background:#6a9955;opacity:.38"></div>
<div style="position:absolute;left:949.8px;top:224.2px;width:6.8px;height:1.1px;background:#6a9955;opacity:.38"></div>
<div style="position:absolute;left:957.4px;top:224.2px;width:6.8px;height:1.1px;background:#6a9955;opacity:.38"></div>
<div style="position:absolute;left:965.1px;top:224.2px;width:6.0px;height:1.1px;background:#6a9955;opacity:.38"></div>
<div style="position:absolute;left:971.9px;top:224.2px;width:4.2px;height:1.1px;background:#6a9955;opacity:.38"></div>
<div style="position:absolute;left:977.0px;top:224.2px;width:5.1px;height:1.1px;background:#6a9955;opacity:.38"></div>
<div style="position:absolute;left:930.2px;top:225.8px;width:6.0px;height:1.1px;background:#6a9955;opacity:.38"></div>
<div style="position:absolute;left:937.0px;top:225.8px;width:1.7px;height:1.1px;background:#6a9955;opacity:.38"></div>
<div style="position:absolute;left:939.6px;top:225.8px;width:1.7px;height:1.1px;background:#6a9955;opacity:.38"></div>
<div style="position:absolute;left:942.1px;top:225.8px;width:6.0px;height:1.1px;background:#6a9955;opacity:.38"></div>
<div style="position:absolute;left:948.9px;top:225.8px;width:4.2px;height:1.1px;background:#6a9955;opacity:.38"></div>
<div style="position:absolute;left:954.0px;top:225.8px;width:4.2px;height:1.1px;background:#6a9955;opacity:.38"></div>
<div style="position:absolute;left:959.1px;top:225.8px;width:5.1px;height:1.1px;background:#6a9955;opacity:.38"></div>
<div style="position:absolute;left:965.1px;top:225.8px;width:6.8px;height:1.1px;background:#6a9955;opacity:.38"></div>
<div style="position:absolute;left:930.2px;top:229.0px;width:4.2px;height:1.1px;background:#6a9955;opacity:.38"></div>
<div style="position:absolute;left:935.3px;top:229.0px;width:1.7px;height:1.1px;background:#6a9955;opacity:.38"></div>
<div style="position:absolute;left:937.9px;top:229.0px;width:5.1px;height:1.1px;background:#6a9955;opacity:.38"></div>
<div style="position:absolute;left:943.8px;top:229.0px;width:2.5px;height:1.1px;background:#6a9955;opacity:.38"></div>
<div style="position:absolute;left:947.2px;top:229.0px;width:2.5px;height:1.1px;background:#6a9955;opacity:.38"></div>
<div style="position:absolute;left:950.6px;top:229.0px;width:4.2px;height:1.1px;background:#6a9955;opacity:.38"></div>
<div style="position:absolute;left:955.7px;top:229.0px;width:4.2px;height:1.1px;background:#6a9955;opacity:.38"></div>
<div style="position:absolute;left:960.8px;top:229.0px;width:3.4px;height:1.1px;background:#6a9955;opacity:.38"></div>
<div style="position:absolute;left:965.1px;top:229.0px;width:3.4px;height:1.1px;background:#6a9955;opacity:.38"></div>
<div style="position:absolute;left:969.3px;top:229.0px;width:3.4px;height:1.1px;background:#6a9955;opacity:.38"></div>
<div style="position:absolute;left:973.6px;top:229.0px;width:3.4px;height:1.1px;background:#6a9955;opacity:.38"></div>
<div style="position:absolute;left:930.2px;top:230.6px;width:6.0px;height:1.1px;background:#6a9955;opacity:.38"></div>
<div style="position:absolute;left:937.0px;top:230.6px;width:3.4px;height:1.1px;background:#6a9955;opacity:.38"></div>
<div style="position:absolute;left:941.3px;top:230.6px;width:4.2px;height:1.1px;background:#6a9955;opacity:.38"></div>
<div style="position:absolute;left:946.4px;top:230.6px;width:6.0px;height:1.1px;background:#6a9955;opacity:.38"></div>
<div style="position:absolute;left:953.2px;top:230.6px;width:2.5px;height:1.1px;background:#6a9955;opacity:.38"></div>
<div style="position:absolute;left:956.6px;top:230.6px;width:3.4px;height:1.1px;background:#6a9955;opacity:.38"></div>
<div style="position:absolute;left:960.8px;top:230.6px;width:4.2px;height:1.1px;background:#6a9955;opacity:.38"></div>
<div style="position:absolute;left:965.9px;top:230.6px;width:5.1px;height:1.1px;background:#6a9955;opacity:.38"></div>
<div style="position:absolute;left:971.9px;top:230.6px;width:6.0px;height:1.1px;background:#6a9955;opacity:.38"></div>
<div style="position:absolute;left:978.7px;top:230.6px;width:4.2px;height:1.1px;background:#6a9955;opacity:.38"></div>
<div style="position:absolute;left:930.2px;top:233.8px;width:1.7px;height:1.1px;background:#6a9955;opacity:.38"></div>
<div style="position:absolute;left:932.8px;top:233.8px;width:2.5px;height:1.1px;background:#6a9955;opacity:.38"></div>
<div style="position:absolute;left:936.2px;top:233.8px;width:5.1px;height:1.1px;background:#6a9955;opacity:.38"></div>
<div style="position:absolute;left:942.1px;top:233.8px;width:6.8px;height:1.1px;background:#6a9955;opacity:.38"></div>
<div style="position:absolute;left:949.8px;top:233.8px;width:4.2px;height:1.1px;background:#6a9955;opacity:.38"></div>
<div style="position:absolute;left:954.9px;top:233.8px;width:5.1px;height:1.1px;background:#6a9955;opacity:.38"></div>
<div style="position:absolute;left:960.8px;top:233.8px;width:2.5px;height:1.1px;background:#6a9955;opacity:.38"></div>
<div style="position:absolute;left:964.2px;top:233.8px;width:4.2px;height:1.1px;background:#6a9955;opacity:.38"></div>
<div style="position:absolute;left:930.2px;top:235.4px;width:6.8px;height:1.1px;background:#6a9955;opacity:.38"></div>
<div style="position:absolute;left:937.9px;top:235.4px;width:4.2px;height:1.1px;background:#6a9955;opacity:.38"></div>
<div style="position:absolute;left:943.0px;top:235.4px;width:4.2px;height:1.1px;background:#6a9955;opacity:.38"></div>
<div style="position:absolute;left:948.1px;top:235.4px;width:2.5px;height:1.1px;background:#6a9955;opacity:.38"></div>
<div style="position:absolute;left:951.5px;top:235.4px;width:5.1px;height:1.1px;background:#6a9955;opacity:.38"></div>
<div style="position:absolute;left:957.4px;top:235.4px;width:2.5px;height:1.1px;background:#6a9955;opacity:.38"></div>
<div style="position:absolute;left:960.8px;top:235.4px;width:2.5px;height:1.1px;background:#6a9955;opacity:.38"></div>
<div style="position:absolute;left:964.2px;top:235.4px;width:1.7px;height:1.1px;background:#6a9955;opacity:.38"></div>
<div style="position:absolute;left:966.8px;top:235.4px;width:2.5px;height:1.1px;background:#6a9955;opacity:.38"></div>
<div style="position:absolute;left:970.2px;top:235.4px;width:3.4px;height:1.1px;background:#6a9955;opacity:.38"></div>
<div style="position:absolute;left:974.4px;top:235.4px;width:5.1px;height:1.1px;background:#6a9955;opacity:.38"></div>
<div style="position:absolute;left:925.1px;top:238.6px;width:2.5px;height:1.1px;background:#d4d4d4;opacity:.38"></div>
<div style="position:absolute;left:927.7px;top:238.6px;width:7.6px;height:1.1px;background:#c99078;opacity:.38"></div>
<div style="position:absolute;left:935.3px;top:238.6px;width:7.6px;height:1.1px;background:#d4d4d4;opacity:.38"></div>
<div style="position:absolute;left:926.8px;top:240.2px;width:10.2px;height:1.1px;background:#d4d4d4;opacity:.38"></div>
<div style="position:absolute;left:937.0px;top:240.2px;width:11.0px;height:1.1px;background:#d9d6a8;opacity:.38"></div>
<div style="position:absolute;left:948.1px;top:240.2px;width:3.4px;height:1.1px;background:#d4d4d4;opacity:.38"></div>
<div style="position:absolute;left:952.3px;top:240.2px;width:7.6px;height:1.1px;background:#d4d4d4;opacity:.38"></div>
<div style="position:absolute;left:925.1px;top:241.8px;width:4.2px;height:1.1px;background:#54bea5;opacity:.38"></div>
<div style="position:absolute;left:930.2px;top:241.8px;width:10.2px;height:1.1px;background:#f0cf45;opacity:.38"></div>
<div style="position:absolute;left:940.4px;top:241.8px;width:7.6px;height:1.1px;background:#54bea5;opacity:.38"></div>
<div style="position:absolute;left:921.7px;top:243.4px;width:5.1px;height:1.1px;background:#f0cf45;opacity:.38"></div>
<div style="position:absolute;left:926.8px;top:243.4px;width:4.2px;height:1.1px;background:#d4d4d4;opacity:.38"></div>
<div style="position:absolute;left:931.9px;top:243.4px;width:11.9px;height:1.1px;background:#54bea5;opacity:.38"></div>
<div style="position:absolute;left:943.8px;top:243.4px;width:3.4px;height:1.1px;background:#f0cf45;opacity:.38"></div>
<div style="position:absolute;left:925.1px;top:246.6px;width:11.0px;height:1.1px;background:#54bea5;opacity:.38"></div>
<div style="position:absolute;left:936.2px;top:246.6px;width:11.0px;height:1.1px;background:#d9d6a8;opacity:.38"></div>
<div style="position:absolute;left:923.4px;top:248.2px;width:3.4px;height:1.1px;background:#54bea5;opacity:.38"></div>
<div style="position:absolute;left:928.5px;top:249.8px;width:6.0px;height:1.1px;background:#c99078;opacity:.38"></div>
<div style="position:absolute;left:935.3px;top:249.8px;width:2.5px;height:1.1px;background:#54bea5;opacity:.38"></div>
<div style="position:absolute;left:921.7px;top:251.4px;width:11.0px;height:1.1px;background:#5a98cf;opacity:.38"></div>
<div style="position:absolute;left:932.8px;top:251.4px;width:8.5px;height:1.1px;background:#d4d4d4;opacity:.38"></div>
<div style="position:absolute;left:941.2px;top:251.4px;width:2.5px;height:1.1px;background:#d4d4d4;opacity:.38"></div>
<div style="position:absolute;left:926.8px;top:253.0px;width:2.5px;height:1.1px;background:#54bea5;opacity:.38"></div>
<div style="position:absolute;left:930.2px;top:253.0px;width:3.4px;height:1.1px;background:#c99078;opacity:.38"></div>
<div style="position:absolute;left:934.5px;top:253.0px;width:6.8px;height:1.1px;background:#c99078;opacity:.38"></div>
<div style="position:absolute;left:923.4px;top:256.2px;width:11.0px;height:1.1px;background:#5a98cf;opacity:.38"></div>
<div style="position:absolute;left:935.3px;top:256.2px;width:6.0px;height:1.1px;background:#54bea5;opacity:.38"></div>
<div style="position:absolute;left:941.3px;top:256.2px;width:5.1px;height:1.1px;background:#54bea5;opacity:.38"></div>
<div style="position:absolute;left:946.4px;top:256.2px;width:6.0px;height:1.1px;background:#d4d4d4;opacity:.38"></div>
<div style="position:absolute;left:925.1px;top:257.8px;width:6.0px;height:1.1px;background:#d4d4d4;opacity:.38"></div>
<div style="position:absolute;left:931.1px;top:257.8px;width:3.4px;height:1.1px;background:#d4d4d4;opacity:.38"></div>
<div style="position:absolute;left:934.5px;top:257.8px;width:10.2px;height:1.1px;background:#f0cf45;opacity:.38"></div>
<div style="position:absolute;left:945.5px;top:257.8px;width:8.5px;height:1.1px;background:#d4d4d4;opacity:.38"></div>
<div style="position:absolute;left:923.4px;top:259.4px;width:2.5px;height:1.1px;background:#c99078;opacity:.38"></div>
<div style="position:absolute;left:926.8px;top:259.4px;width:7.6px;height:1.1px;background:#d9d6a8;opacity:.38"></div>
<div style="position:absolute;left:926.8px;top:262.6px;width:3.4px;height:1.1px;background:#54bea5;opacity:.38"></div>
<div style="position:absolute;left:930.2px;top:262.6px;width:5.1px;height:1.1px;background:#5a98cf;opacity:.38"></div>
<div style="position:absolute;left:936.2px;top:262.6px;width:2.5px;height:1.1px;background:#f0cf45;opacity:.38"></div>
<div style="position:absolute;left:926.8px;top:264.2px;width:8.5px;height:1.1px;background:#5a98cf;opacity:.38"></div>
<div style="position:absolute;left:936.2px;top:264.2px;width:3.4px;height:1.1px;background:#54bea5;opacity:.38"></div>
<div style="position:absolute;left:940.4px;top:264.2px;width:7.6px;height:1.1px;background:#5a98cf;opacity:.38"></div>
<div style="position:absolute;left:921.7px;top:267.4px;width:6.8px;height:1.1px;background:#c99078;opacity:.38"></div>
<div style="position:absolute;left:928.5px;top:267.4px;width:7.6px;height:1.1px;background:#d4d4d4;opacity:.38"></div>
<div style="position:absolute;left:923.4px;top:269.0px;width:9.3px;height:1.1px;background:#5a98cf;opacity:.38"></div>
<div style="position:absolute;left:932.8px;top:269.0px;width:6.8px;height:1.1px;background:#d4d4d4;opacity:.38"></div>
<div style="position:absolute;left:926.8px;top:270.6px;width:5.1px;height:1.1px;background:#c99078;opacity:.38"></div>
<div class="a" style="left:919px;top:59px;width:92px;height:2px;background:rgba(255,255,255,.06)"></div>
<div class="a" style="left:919px;top:71.5px;width:105px;height:1px;background:rgba(200,200,200,.22)"></div>
<div class="a" style="left:1012px;top:46px;width:1px;height:515px;background:#2a2a2a"></div>
<div class="a" style="left:1016px;top:70px;width:5px;height:3.5px;background:#7a7a7a"></div>
<div class="a" style="left:1016.5px;top:91px;width:3.5px;height:6px;background:#6a6a6a;border-radius:1px"></div>

<!-- GREEN RECT -->
<div class="a" style="left:211px;top:94.3px;width:372.8px;height:126.6px;border:3.7px solid #17e51a"></div>
<!-- BLACK RECT -->
<div class="a" style="left:460.5px;top:280.5px;width:104.5px;height:79px;border:3.7px solid #000"></div>

<!-- PANEL -->
<div class="a" style="left:174px;top:561px;width:850px;height:61px;background:#1e1e1e;border-top:1px solid #3c3c3c"></div>
<div class="t" style="left:191px;top:571.5px;font-size:8.4px;color:#e7e7e7">PROBLEMS</div>
<div class="a" style="left:188px;top:585.5px;width:52px;height:1.2px;background:#e7e7e7"></div>
<div class="t" style="left:257px;top:571.3px;font-size:8.8px;color:#9d9d9d">OUTPUT</div>
<div class="t" style="left:313px;top:571.3px;font-size:8.8px;color:#9d9d9d">DEBUG CONSOLE</div>
<div class="t" style="left:408px;top:571.3px;font-size:8.8px;color:#9d9d9d">TERMINAL</div>
<div class="a" style="left:616px;top:566px;width:60px;height:18px;background:#3c3c3c"></div>
<div class="t sb" style="left:623.5px;top:571px;color:#a0a0a0">Filter (e</div>
<div class="t sb" style="left:190.5px;top:592.5px">No problems have been detected in the workspace.</div>

<!-- NOTIFICATION TOAST -->
<div class="a" style="left:655px;top:528px;width:360px;height:84px;background:#252526;box-shadow:0 0 8px 2px rgba(0,0,0,.55)"></div>
<svg class="ic" style="left:662.5px;top:537.5px" width="13" height="13" viewBox="0 0 14 14"><circle cx="7" cy="7" r="6" fill="none" stroke="#5f8fd8" stroke-width="1.4"/><rect x="6.35" y="6" width="1.4" height="4.5" fill="#8fb4ea"/><rect x="6.35" y="3.4" width="1.4" height="1.5" fill="#8fb4ea"/></svg>
<div class="t sb" style="left:680.5px;top:538.5px;font-size:10.85px">Your SDK has been updated since you last fetched</div>
<div class="t sb" style="left:680.5px;top:557.5px;font-size:10.85px">packages, would you like to fetch updated packages?</div>
<svg class="ic" style="left:971.5px;top:538.5px" width="13" height="13" viewBox="0 0 24 24" fill="none" stroke="#c5c5c5" stroke-width="2"><path d="M10.3 2 h3.4 l.5 2.7 1.9 .8 2.3-1.6 2.4 2.4-1.6 2.3 .8 1.9 2.7 .5 v3.4 l-2.7 .5-.8 1.9 1.6 2.3-2.4 2.4-2.3-1.6-1.9 .8-.5 2.7 h-3.4 l-.5-2.7-1.9-.8-2.3 1.6-2.4-2.4 1.6-2.3-.8-1.9-2.7-.5 v-3.4 l2.7-.5 .8-1.9-1.6-2.3 2.4-2.4 2.3 1.6 1.9-.8 z"/><circle cx="12" cy="12" r="3"/></svg>
<svg class="ic" style="left:994.5px;top:540.5px" width="9" height="9" viewBox="0 0 9 9" fill="none" stroke="#c5c5c5" stroke-width="1.2"><path d="M1 1 L8 8 M8 1 L1 8"/></svg>
<div class="t sb" style="left:663px;top:585.5px;font-size:10.3px">Source: Dart (Extension)</div>
<div class="a" style="left:908px;top:579.5px;width:100px;height:22px;background:#136aae;border-radius:2px"></div>
<div class="t" style="left:908px;top:585.3px;width:100px;text-align:center;font-size:10.5px;color:#ffffff">Run 'pub upgrade'</div>

<!-- STATUS BAR -->
<div class="a" style="left:0;top:622px;width:1024px;height:18px;background:#007acc"></div>
<svg class="ic" style="left:12px;top:625px" width="7" height="12" viewBox="0 0 7 12" fill="none" stroke="#fff" stroke-width="1.1"><circle cx="1.8" cy="1.8" r="1.3"/><circle cx="1.8" cy="10.2" r="1.3"/><circle cx="5.2" cy="4.5" r="1.3"/><path d="M1.8 3.1 V8.9 M5.2 5.8 C5.2 7.5 2.5 7.3 1.9 8.9"/></svg>
<div class="t" style="left:25.5px;top:626.5px;font-size:10px;color:#ffffff;-webkit-text-stroke:0.45px #fff;">main</div>
<svg class="ic" style="left:60px;top:625.5px" width="12" height="11" viewBox="0 0 12 11" fill="none" stroke="#fff" stroke-width="1.1"><path d="M1.5 4.5 A4.5 4.5 0 0 1 10 3.5 M10.5 6.5 A4.5 4.5 0 0 1 2 7.5"/><path d="M10.3 1 V3.8 H7.5 M1.7 10 V7.2 H4.5"/></svg>
<svg class="ic" style="left:84.5px;top:626px" width="11" height="11" viewBox="0 0 11 11" fill="none" stroke="#fff" stroke-width="1.1"><circle cx="5.5" cy="5.5" r="4.7"/><path d="M3.5 3.5 L7.5 7.5 M7.5 3.5 L3.5 7.5"/></svg>
<div class="t" style="left:98px;top:626.5px;font-size:10px;color:#ffffff;-webkit-text-stroke:0.45px #fff;">0</div>
<svg class="ic" style="left:107px;top:625.5px" width="12" height="11" viewBox="0 0 12 11" fill="none" stroke="#fff" stroke-width="1.1"><path d="M6 1 L11.2 10.3 H.8 Z M6 4 V7.2 M6 8.3 V9.2"/></svg>
<div class="t" style="left:121px;top:626.5px;font-size:10px;color:#ffffff;-webkit-text-stroke:0.45px #fff;">0</div>
<svg class="ic" style="left:139px;top:625px" width="13" height="12" viewBox="0 0 13 12" fill="none" stroke="#fff" stroke-width="1.2"><path d="M1 7 C1.5 4 4 3 8 3 H11.5 M9 .8 L11.8 3 L9 5.2"/><path d="M3 7.8 C4 6 5.5 5.3 8 5.3"/><circle cx="5" cy="9.5" r="1.6"/></svg>
<div class="t" style="left:153.5px;top:626.5px;font-size:10px;color:#ffffff;-webkit-text-stroke:0.45px #fff;">Live Share</div>
<div class="t" style="left:432.5px;top:626.5px;font-size:10px;color:#ffffff;-webkit-text-stroke:0.45px #fff;">Ln 10, Col 43</div>
<div class="t" style="left:505px;top:626.5px;font-size:10px;color:#ffffff;-webkit-text-stroke:0.45px #fff;">Spaces: 2</div>
<div class="t" style="left:562px;top:626.5px;font-size:10px;color:#ffffff;-webkit-text-stroke:0.45px #fff;">UTF-8</div>
<div class="t" style="left:604px;top:626.5px;font-size:10px;color:#ffffff;-webkit-text-stroke:0.45px #fff;">LF</div>
<div class="t" style="left:627px;top:626.5px;font-size:10px;color:#ffffff;-webkit-text-stroke:0.45px #fff;font-size:9px;top:627px">{ }</div>
<div class="t" style="left:643px;top:626.5px;font-size:10px;color:#ffffff;-webkit-text-stroke:0.45px #fff;">Dart</div>
<svg class="ic" style="left:671px;top:625px" width="10" height="12" viewBox="0 0 10 12" fill="none" stroke="#fff" stroke-width="1.1"><circle cx="5" cy="5" r="4"/><circle cx="5" cy="5" r="1.6" fill="#fff"/><path d="M5 6.5 V11.5"/></svg>
<div class="t" style="left:688px;top:626.5px;font-size:10px;color:#ffffff;-webkit-text-stroke:0.45px #fff;">Go Live</div>
<div class="t" style="left:735.5px;top:626.5px;font-size:10px;color:#ffffff;-webkit-text-stroke:0.45px #fff;">Explain (Denigma)</div>
<div class="t" style="left:830.5px;top:626.5px;font-size:10px;color:#ffffff;-webkit-text-stroke:0.45px #fff;">macOS (darwin)</div>
<svg class="ic" style="left:911.5px;top:626px" width="11" height="11" viewBox="0 0 11 11" fill="none" stroke="#fff" stroke-width="1.1"><circle cx="5.5" cy="5.5" r="4.6"/><path d="M2.3 8.7 L8.7 2.3"/></svg>
<div class="t" style="left:929.5px;top:626.5px;font-size:10px;color:#ffffff;-webkit-text-stroke:0.45px #fff;">Prettier</div>
<svg class="ic" style="left:975.5px;top:625.5px" width="13" height="12" viewBox="0 0 13 12" fill="none" stroke="#fff" stroke-width="1.1"><circle cx="5" cy="4" r="2.3"/><path d="M1 11 C1.5 8 3 7 5 7 C7 7 8.5 8 9 11 M8 1.5 H12 V6 H10.5"/></svg>
<svg class="ic" style="left:1000.5px;top:625px" width="12" height="12" viewBox="0 0 12 12" fill="none" stroke="#fff" stroke-width="1.1"><path d="M2 9 H10 L9 7.5 V5 A3 3 0 0 0 3 5 V7.5 Z M4.8 10.5 A1.3 1.3 0 0 0 7.2 10.5"/><circle cx="9.5" cy="2.5" r="1.8" fill="#fff" stroke="none"/></svg>

</body></html>
